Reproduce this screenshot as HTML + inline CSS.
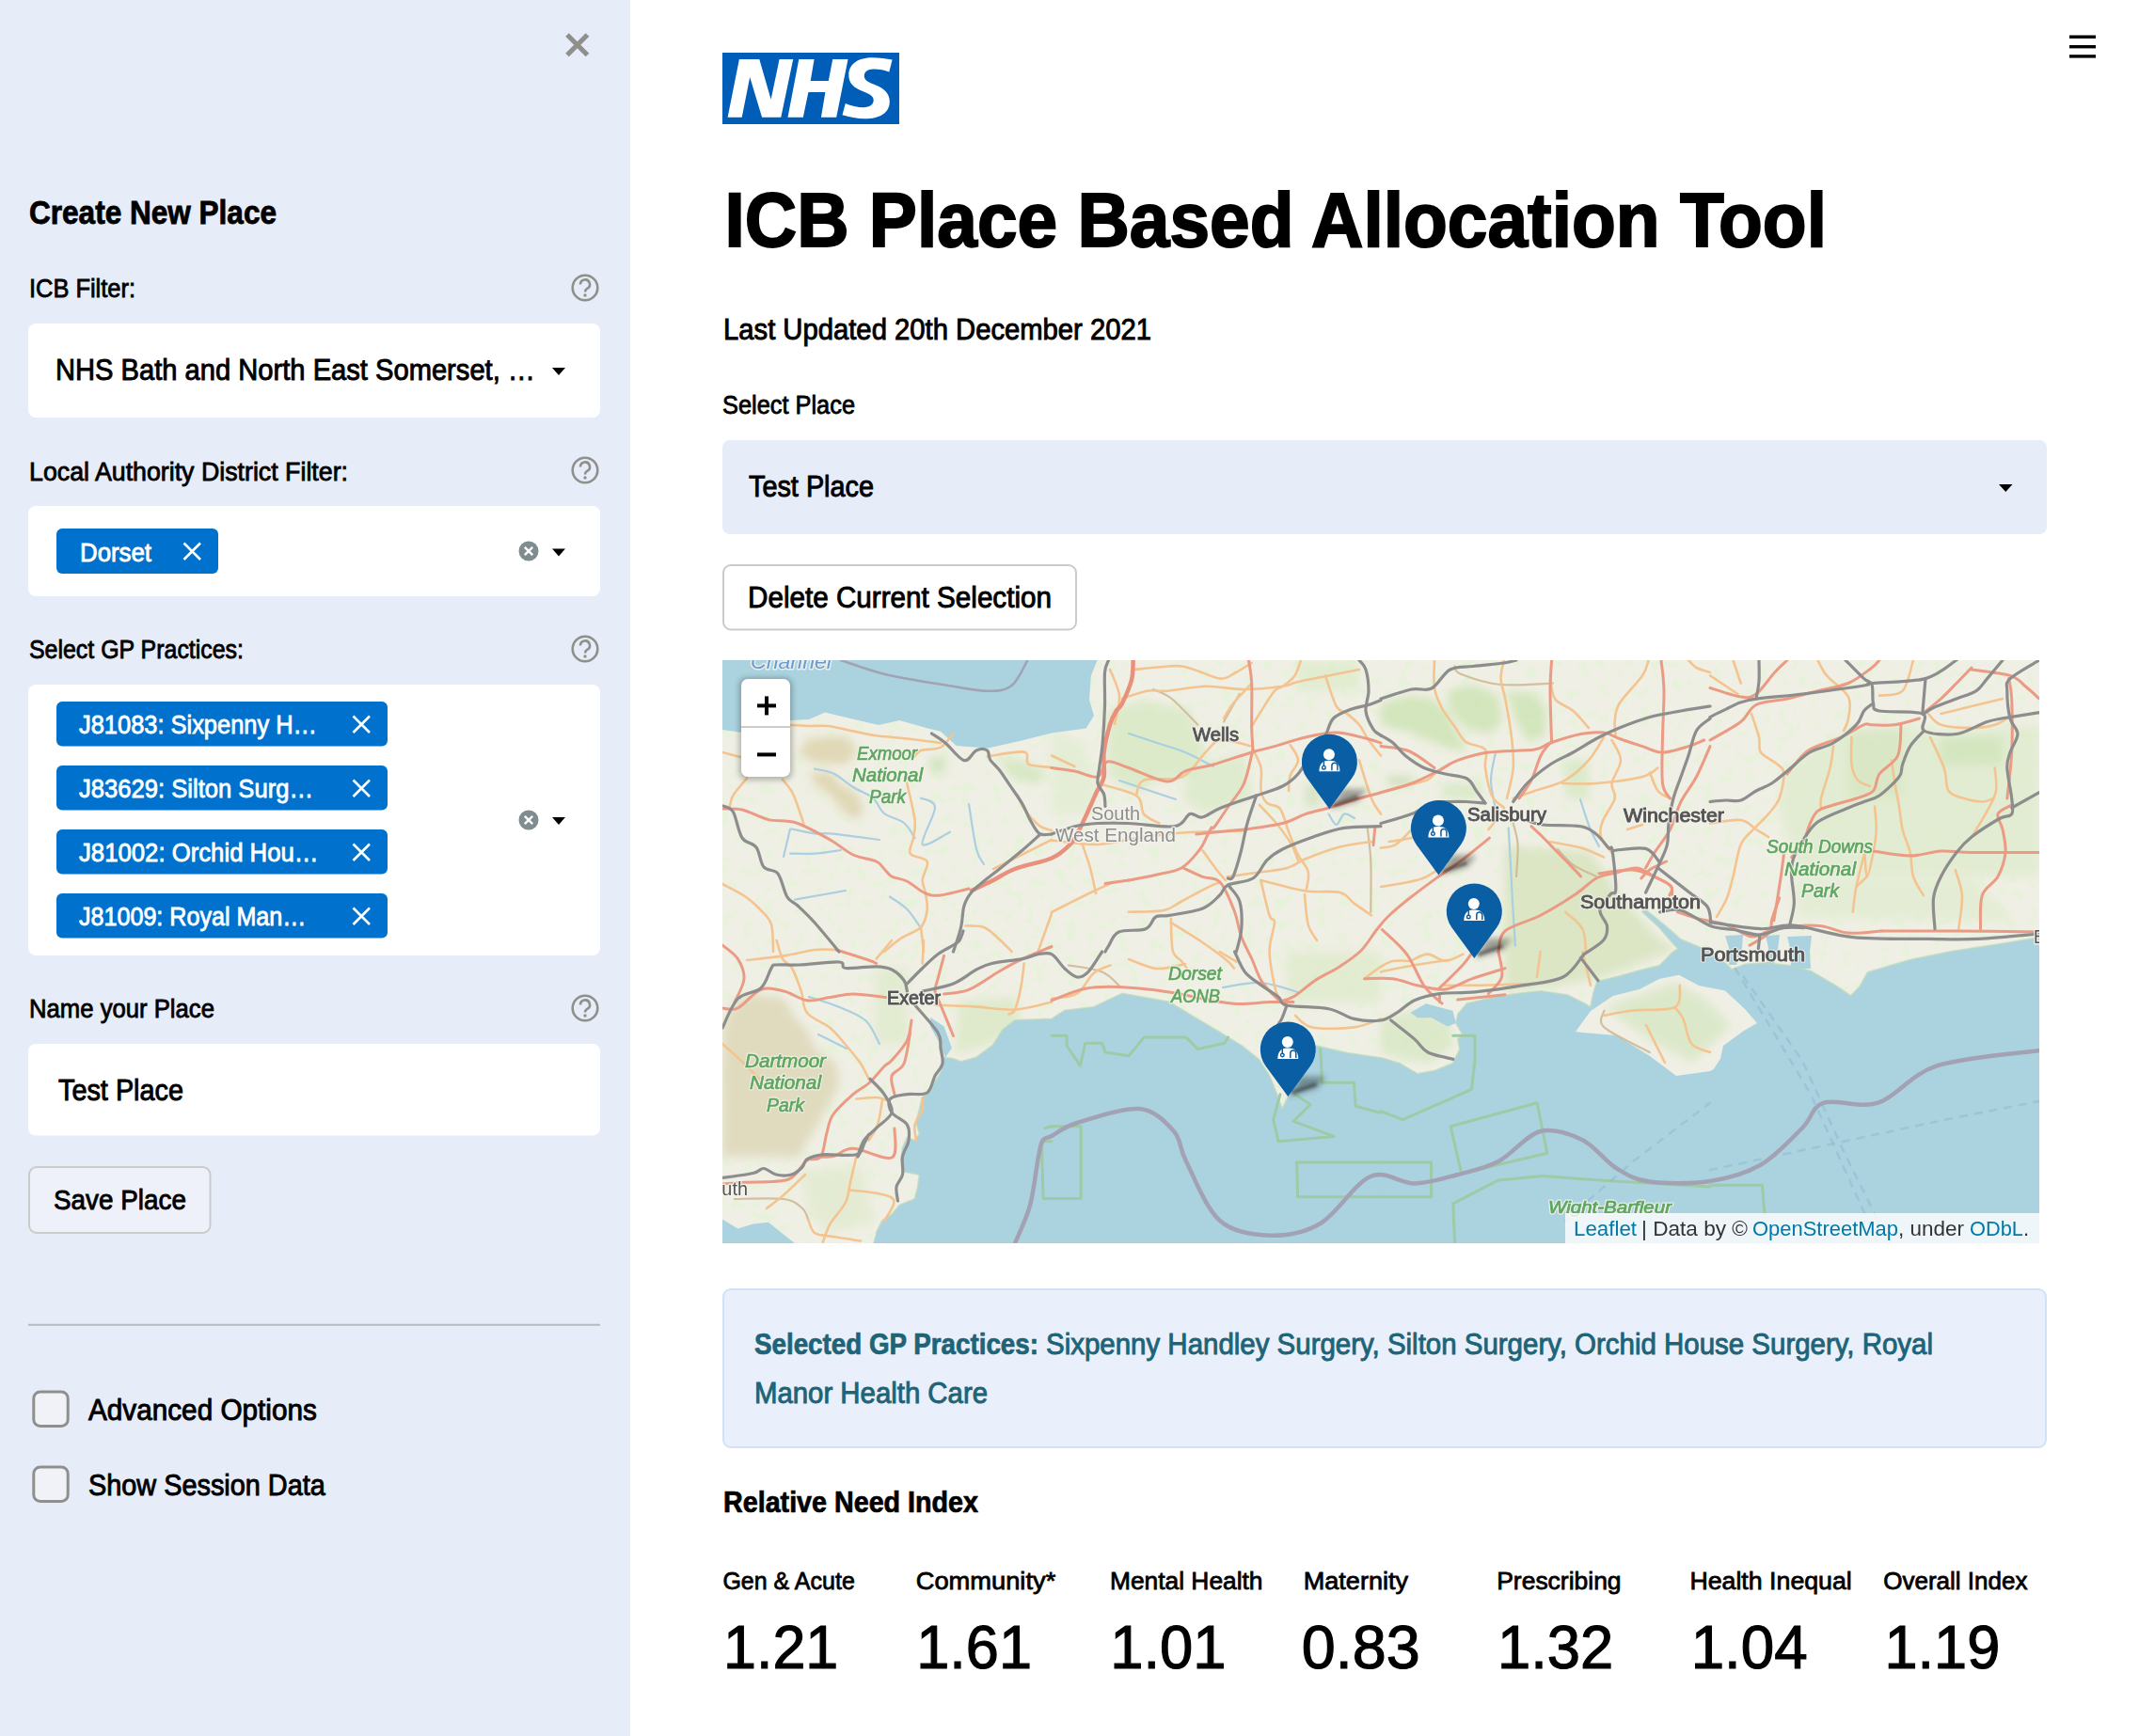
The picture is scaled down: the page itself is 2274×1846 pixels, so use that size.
<!DOCTYPE html>
<html><head><meta charset="utf-8"><title>ICB Place Based Allocation Tool</title>
<style>
html,body{margin:0;padding:0;background:#fff;overflow:hidden;}
body{width:2274px;height:1846px;position:relative;}
svg{position:absolute;left:0;top:0;display:block;font-family:"Liberation Sans",sans-serif;}
</style></head><body>
<svg width="2274" height="1846" viewBox="0 0 2274 1846" xmlns="http://www.w3.org/2000/svg">
<rect x="0" y="0" width="670" height="1846" fill="#e6ecf8"/>
<path d="M603 37 L624.5 58.5 M624.5 37 L603 58.5" stroke="#8f8f8b" stroke-width="5.2"/>
<text x="31" y="238" font-size="35" font-weight="700" stroke="#000" stroke-width="0.84" textLength="263" lengthAdjust="spacingAndGlyphs">Create New Place</text>
<text x="31" y="316" font-size="27.5" stroke="#000" stroke-width="0.82" textLength="113" lengthAdjust="spacingAndGlyphs">ICB Filter:</text>
<circle cx="622" cy="306" r="13.3" fill="none" stroke="#8f8f8b" stroke-width="2.6"/><path d="M617 302.5 a5 5 0 1 1 7.2 4.4 c-1.6 0.9 -2.2 1.6 -2.2 3.6" fill="none" stroke="#8f8f8b" stroke-width="2.6" stroke-linecap="butt"/><circle cx="622" cy="314" r="1.7" fill="#8f8f8b"/>
<rect x="30" y="344" width="608" height="100" rx="8" fill="#fff"/>
<text x="59" y="404" font-size="32" stroke="#000" stroke-width="0.96" textLength="510" lengthAdjust="spacingAndGlyphs">NHS Bath and North East Somerset, …</text>
<path d="M587 391 L601 391 L594.0 399 Z" fill="#000"/>
<text x="31" y="510.5" font-size="27.5" stroke="#000" stroke-width="0.82" textLength="339" lengthAdjust="spacingAndGlyphs">Local Authority District Filter:</text>
<circle cx="622" cy="500" r="13.3" fill="none" stroke="#8f8f8b" stroke-width="2.6"/><path d="M617 496.5 a5 5 0 1 1 7.2 4.4 c-1.6 0.9 -2.2 1.6 -2.2 3.6" fill="none" stroke="#8f8f8b" stroke-width="2.6" stroke-linecap="butt"/><circle cx="622" cy="508" r="1.7" fill="#8f8f8b"/>
<rect x="30" y="538" width="608" height="96" rx="8" fill="#fff"/>
<rect x="60" y="562" width="172" height="48" rx="6" fill="#0072ce"/>
<text x="85" y="596.5" font-size="27.5" fill="#fff" stroke="#fff" stroke-width="0.82" textLength="76" lengthAdjust="spacingAndGlyphs">Dorset</text>
<path d="M195.5 577.5 L213.0 595.0 M213.0 577.5 L195.5 595.0" stroke="#fff" stroke-width="2.6"/>
<circle cx="562" cy="586" r="10.5" fill="#7f8c90"/><path d="M557.8 581.8 L566.2 590.2 M566.2 581.8 L557.8 590.2" stroke="#fff" stroke-width="2.4"/>
<path d="M587 583.5 L601 583.5 L594.0 591.5 Z" fill="#000"/>
<text x="31" y="700" font-size="27.5" stroke="#000" stroke-width="0.82" textLength="228" lengthAdjust="spacingAndGlyphs">Select GP Practices:</text>
<circle cx="622" cy="690" r="13.3" fill="none" stroke="#8f8f8b" stroke-width="2.6"/><path d="M617 686.5 a5 5 0 1 1 7.2 4.4 c-1.6 0.9 -2.2 1.6 -2.2 3.6" fill="none" stroke="#8f8f8b" stroke-width="2.6" stroke-linecap="butt"/><circle cx="622" cy="698" r="1.7" fill="#8f8f8b"/>
<rect x="30" y="728" width="608" height="288" rx="8" fill="#fff"/>
<rect x="60" y="746" width="352" height="47.5" rx="6" fill="#0072ce"/>
<text x="84" y="780" font-size="27.5" fill="#fff" stroke="#fff" stroke-width="0.82" textLength="253" lengthAdjust="spacingAndGlyphs">J81083: Sixpenny H…</text>
<path d="M375.5 761.5 L393.0 779.0 M393.0 761.5 L375.5 779.0" stroke="#fff" stroke-width="2.6"/>
<rect x="60" y="814" width="352" height="47.5" rx="6" fill="#0072ce"/>
<text x="84" y="848" font-size="27.5" fill="#fff" stroke="#fff" stroke-width="0.82" textLength="249" lengthAdjust="spacingAndGlyphs">J83629: Silton Surg…</text>
<path d="M375.5 829.5 L393.0 847.0 M393.0 829.5 L375.5 847.0" stroke="#fff" stroke-width="2.6"/>
<rect x="60" y="882" width="352" height="47.5" rx="6" fill="#0072ce"/>
<text x="84" y="916" font-size="27.5" fill="#fff" stroke="#fff" stroke-width="0.82" textLength="254.5" lengthAdjust="spacingAndGlyphs">J81002: Orchid Hou…</text>
<path d="M375.5 897.5 L393.0 915.0 M393.0 897.5 L375.5 915.0" stroke="#fff" stroke-width="2.6"/>
<rect x="60" y="950" width="352" height="47.5" rx="6" fill="#0072ce"/>
<text x="84" y="984" font-size="27.5" fill="#fff" stroke="#fff" stroke-width="0.82" textLength="241.39999999999998" lengthAdjust="spacingAndGlyphs">J81009: Royal Man…</text>
<path d="M375.5 965.5 L393.0 983.0 M393.0 965.5 L375.5 983.0" stroke="#fff" stroke-width="2.6"/>
<circle cx="562" cy="872" r="10.5" fill="#7f8c90"/><path d="M557.8 867.8 L566.2 876.2 M566.2 867.8 L557.8 876.2" stroke="#fff" stroke-width="2.4"/>
<path d="M587 869 L601 869 L594.0 877 Z" fill="#000"/>
<text x="31" y="1082" font-size="27.5" stroke="#000" stroke-width="0.82" textLength="197" lengthAdjust="spacingAndGlyphs">Name your Place</text>
<circle cx="622" cy="1072" r="13.3" fill="none" stroke="#8f8f8b" stroke-width="2.6"/><path d="M617 1068.5 a5 5 0 1 1 7.2 4.4 c-1.6 0.9 -2.2 1.6 -2.2 3.6" fill="none" stroke="#8f8f8b" stroke-width="2.6" stroke-linecap="butt"/><circle cx="622" cy="1080" r="1.7" fill="#8f8f8b"/>
<rect x="30" y="1110" width="608" height="97.5" rx="8" fill="#fff"/>
<text x="62" y="1170" font-size="32" stroke="#000" stroke-width="0.96" textLength="133" lengthAdjust="spacingAndGlyphs">Test Place</text>
<rect x="31" y="1241" width="192.5" height="70" rx="8" fill="#eef1f9" stroke="#c9ccc9" stroke-width="2"/>
<text x="57" y="1286" font-size="30" stroke="#000" stroke-width="0.9" textLength="141" lengthAdjust="spacingAndGlyphs">Save Place</text>
<rect x="30" y="1407.8" width="608" height="2" fill="#b4bcbf"/>
<rect x="35.8" y="1480.0" width="36.4" height="36.4" rx="7" fill="#f0f2f8" stroke="#8f8f8b" stroke-width="3"/>
<text x="94" y="1509.5" font-size="31" stroke="#000" stroke-width="0.93" textLength="242.8" lengthAdjust="spacingAndGlyphs">Advanced Options</text>
<rect x="35.8" y="1560.0" width="36.4" height="36.4" rx="7" fill="#f0f2f8" stroke="#8f8f8b" stroke-width="3"/>
<text x="94" y="1589.5" font-size="31" stroke="#000" stroke-width="0.93" textLength="251.8" lengthAdjust="spacingAndGlyphs">Show Session Data</text>
<rect x="2200" y="37.5" width="28" height="3.4" fill="#000"/>
<rect x="2200" y="48" width="28" height="3.4" fill="#000"/>
<rect x="2200" y="58.2" width="28" height="3.4" fill="#000"/>
<g transform="translate(768,56)"><rect width="188" height="76" fill="#005eb8"/><path d="M17.9 7.1 L39.3 7.1 L51.6 49.7 L60.6 7.1 L75.2 7.1 L62.3 68.8 L42.1 68.8 L29.2 26.1 L20.7 68.8 L5.6 68.8 Z M81.3 7.1 L97.6 7.1 L93.7 30.1 L112.8 30.1 L117.2 7.1 L133.5 7.1 L121.2 68.8 L104.9 68.8 L109.4 41.9 L91.4 41.9 L85.8 68.8 L69.5 68.8 Z M180.6 7.6 L177.3 20.5 C172 18.3 166 17.3 160.5 17.5 C153 17.8 150.5 21.5 150.8 25.5 C151.2 30 157 32 163 34.5 C171 37.8 177.8 42.5 177.8 52 C177.8 64.5 166.5 70.3 151.5 70.3 C143.5 70.3 134.5 68.6 127.5 66.3 L130.8 54 C136.5 56.5 144 58.2 150 58.2 C156.5 58.2 160.7 55.3 160.7 50.6 C160.7 45.5 155 43.5 148.5 40.8 C140.5 37.5 134.3 33 134.3 24 C134.3 11.5 145 5.3 159.5 5.3 C166.5 5.3 174.5 6.3 180.6 7.6 Z" fill="#fff"/></g>
<text x="770.5" y="262" font-size="82" font-weight="700" stroke="#000" stroke-width="1.97" textLength="1171.5" lengthAdjust="spacingAndGlyphs">ICB Place Based Allocation Tool</text>
<text x="769" y="360.5" font-size="31" stroke="#000" stroke-width="0.93" textLength="455" lengthAdjust="spacingAndGlyphs">Last Updated 20th December 2021</text>
<text x="768" y="440.3" font-size="27.5" stroke="#000" stroke-width="0.82" textLength="141" lengthAdjust="spacingAndGlyphs">Select Place</text>
<rect x="768" y="468" width="1408" height="100" rx="8" fill="#e6ecf8"/>
<text x="796" y="528" font-size="31" stroke="#000" stroke-width="0.93" textLength="133" lengthAdjust="spacingAndGlyphs">Test Place</text>
<path d="M2125 515 L2139.5 515 L2132.25 523 Z" fill="#000"/>
<rect x="769" y="601" width="375" height="68.5" rx="8" fill="#fff" stroke="#c9ccc9" stroke-width="2"/>
<text x="795" y="646.3" font-size="31" stroke="#000" stroke-width="0.93" textLength="323" lengthAdjust="spacingAndGlyphs">Delete Current Selection</text>
<rect x="769" y="1371" width="1406" height="168" rx="8" fill="#eaf0fb" stroke="#d2e1f5" stroke-width="2"/>
<text x="802" y="1439.6" font-size="31" font-weight="700" fill="#1d6479" stroke="#1d6479" stroke-width="0.74" textLength="302" lengthAdjust="spacingAndGlyphs">Selected GP Practices:</text>
<text x="1112" y="1439.6" font-size="31" fill="#1d6479" stroke="#1d6479" stroke-width="0.93" textLength="943" lengthAdjust="spacingAndGlyphs">Sixpenny Handley Surgery, Silton Surgery, Orchid House Surgery, Royal</text>
<text x="802" y="1491.6" font-size="31" fill="#1d6479" stroke="#1d6479" stroke-width="0.93" textLength="248" lengthAdjust="spacingAndGlyphs">Manor Health Care</text>
<text x="769" y="1608.4" font-size="31" font-weight="700" stroke="#000" stroke-width="0.74" textLength="271" lengthAdjust="spacingAndGlyphs">Relative Need Index</text>
<text x="768.4" y="1690" font-size="26.5" stroke="#000" stroke-width="0.79" textLength="140.39999999999998" lengthAdjust="spacingAndGlyphs">Gen &amp; Acute</text>
<text x="973.7" y="1690" font-size="26.5" stroke="#000" stroke-width="0.79" textLength="148.5999999999999" lengthAdjust="spacingAndGlyphs">Community*</text>
<text x="1180" y="1690" font-size="26.5" stroke="#000" stroke-width="0.79" textLength="162.5" lengthAdjust="spacingAndGlyphs">Mental Health</text>
<text x="1385.7" y="1690" font-size="26.5" stroke="#000" stroke-width="0.79" textLength="111.39999999999986" lengthAdjust="spacingAndGlyphs">Maternity</text>
<text x="1591.2" y="1690" font-size="26.5" stroke="#000" stroke-width="0.79" textLength="132.39999999999986" lengthAdjust="spacingAndGlyphs">Prescribing</text>
<text x="1796.4" y="1690" font-size="26.5" stroke="#000" stroke-width="0.79" textLength="172.39999999999986" lengthAdjust="spacingAndGlyphs">Health Inequal</text>
<text x="2002.2" y="1690" font-size="26.5" stroke="#000" stroke-width="0.79" textLength="153.29999999999995" lengthAdjust="spacingAndGlyphs">Overall Index</text>
<text x="769" y="1774" font-size="65.5" stroke="#000" stroke-width="1.2" textLength="122.29999999999995" lengthAdjust="spacingAndGlyphs">1.21</text>
<text x="974.3" y="1774" font-size="65.5" stroke="#000" stroke-width="1.2" textLength="122.70000000000005" lengthAdjust="spacingAndGlyphs">1.61</text>
<text x="1180.3" y="1774" font-size="65.5" stroke="#000" stroke-width="1.2" textLength="123.20000000000005" lengthAdjust="spacingAndGlyphs">1.01</text>
<text x="1383.8" y="1774" font-size="65.5" stroke="#000" stroke-width="1.2" textLength="125.90000000000009" lengthAdjust="spacingAndGlyphs">0.83</text>
<text x="1592" y="1774" font-size="65.5" stroke="#000" stroke-width="1.2" textLength="123.29999999999995" lengthAdjust="spacingAndGlyphs">1.32</text>
<text x="1797.7" y="1774" font-size="65.5" stroke="#000" stroke-width="1.2" textLength="124.0" lengthAdjust="spacingAndGlyphs">1.04</text>
<text x="2003.5" y="1774" font-size="65.5" stroke="#000" stroke-width="1.2" textLength="122.80000000000018" lengthAdjust="spacingAndGlyphs">1.19</text>
<clipPath id="mc"><rect x="768" y="702" width="1400" height="620"/></clipPath>
<filter id="blur3" x="-50%" y="-50%" width="200%" height="200%"><feGaussianBlur stdDeviation="3"/></filter>
<filter id="sblur" x="-50%" y="-50%" width="200%" height="200%"><feGaussianBlur stdDeviation="1.5"/></filter>
<filter id="gblur" x="-20%" y="-20%" width="140%" height="140%"><feGaussianBlur stdDeviation="5"/></filter>
<filter id="speck" x="0" y="0" width="100%" height="100%"><feTurbulence type="fractalNoise" baseFrequency="0.09" numOctaves="2" seed="7"/><feColorMatrix type="matrix" values="0 0 0 0 0.80  0 0 0 0 0.89  0 0 0 0 0.70  8 0 0 0 -4.3"/></filter>
<g clip-path="url(#mc)">
<rect x="768" y="702" width="1400" height="620" fill="#f0efe5"/>
<rect x="768" y="702" width="1400" height="620" filter="url(#speck)" opacity="0.8"/>
<g filter="url(#gblur)">
<path d="M848 801 L859.6 785 L899 783 L912 799.6 L899 812.7 L866 811Z" fill="#ddd2ab" opacity="0.8"/>
<path d="M861 821 L882.5 821 L895.6 835.6 L908.7 842 L918.5 858.5 L912 871.6 L899 865 L882.5 845.5 L866 834Z" fill="#ddd2ab" opacity="0.8"/>
<path d="M989 804.5 L1005 806 L1005 822.5 L989 820Z" fill="#c9e2b4" opacity="0.8"/>
<path d="M1062.6 804.5 L1090 810 L1111.6 820 L1105 834 L1075 828Z" fill="#d2e6bd" opacity="0.8"/>
<path d="M1177 756 L1216 744.5 L1265 756 L1281.6 800 L1265 826 L1232.5 829.6 L1209.6 842.7 L1178.5 826Z" fill="#d9e9c6" opacity="0.85"/>
<path d="M1265 816.5 L1322.5 800 L1330.7 849 L1281.6 865.6 L1257 849Z" fill="#dbeac8" opacity="0.8"/>
<path d="M1380 702 L1445 702 L1445 734.7 L1380 734.7Z" fill="#dcebc9" opacity="0.7"/>
<path d="M1388 833 L1404 833 L1404 857.5 L1388 857.5Z" fill="#cfe4bb" opacity="0.8"/>
<path d="M1118 775.6 L1150 790 L1167 830 L1160 865.6 L1118 865.6Z" fill="#e0ecd0" opacity="0.7"/>
<path d="M1468 748 L1500.7 739.6 L1522 743 L1536.7 756 L1550 780.5 L1559.6 800 L1533.5 793.6 L1500.7 779 L1468 770.7Z" fill="#cfe4b8" opacity="0.9"/>
<path d="M1538.4 734.7 L1566 728 L1592.4 739.6 L1597.3 767.5 L1582.5 780.5 L1558 774 L1541.6 756Z" fill="#cfe4b8" opacity="0.9"/>
<path d="M1602 734.7 L1631.6 738 L1644.7 756 L1641.5 784 L1623.5 787 L1612 767.5Z" fill="#cfe4b8" opacity="0.9"/>
<path d="M1664 808 L1689 808 L1689 849 L1664 849Z" fill="#d6e8c3" opacity="0.8"/>
<path d="M1476 826 L1500.7 826 L1500.7 834.5 L1476 834.5Z" fill="#c5ddb0" opacity="0.9"/>
<path d="M1533.5 833 L1574 833 L1574 849 L1533.5 849Z" fill="#d6e8c3" opacity="0.8"/>
<path d="M1600 900 L1690 905 L1720 950 L1760 995 L1780 1010 L1700 1040 L1640 1050 L1600 1054Z" fill="#d8e4bf" opacity="0.85"/>
<path d="M1895 820 L1932.5 793.6 L1973.5 775.6 L2022.6 772.4 L2063.5 779 L2129 772.4 L2168 770.7 L2168 932 L1916 932 L1891.6 865.6Z" fill="#dfebcd" opacity="0.8"/>
<path d="M2063.5 784 L2129 784 L2129 813 L2063.5 813Z" fill="#cfe3ba" opacity="0.8"/>
<path d="M1965 775.6 L2022.6 775.6 L2022.6 849 L1965 849Z" fill="#d5e6c0" opacity="0.7"/>
<path d="M1905 935 L2100 935 L2140 980 L1910 975Z" fill="#e0ebcf" opacity="0.7"/>
<path d="M768 1091.6 L781 1065.5 L800.7 1057 L833.5 1062 L841.6 1078.5 L859.6 1098 L866 1114.5 L889 1131 L892 1155.5 L882.5 1171.8 L869.5 1196 L858 1212.7 L850 1230 L768 1230Z" fill="#ddd7b8" opacity="0.85"/>
<path d="M930 1030 L965 1030 L965 1110 L930 1110Z" fill="#dde9c9" opacity="0.7"/>
<path d="M1020 1065 L1080 1060 L1085 1095 L1040 1115 L1015 1120Z" fill="#dbe8c6" opacity="0.8"/>
<path d="M850 1245 L915 1240 L930 1300 L880 1310 L860 1290Z" fill="#dfe9cc" opacity="0.7"/>
<path d="M1368 1012 L1468 1012 L1468 1065.6 L1368 1065.6Z" fill="#dde9c9" opacity="0.7"/>
<path d="M1468 1085 L1503 1075 L1540 1085 L1546 1110 L1520 1130 L1490 1125 L1468 1120Z" fill="#d7e7c3" opacity="0.8"/>
<path d="M1705 1071 L1780 1045 L1810 1060 L1840 1090 L1800 1130 L1760 1110Z" fill="#d8e7c4" opacity="0.8"/>
</g>
<path d="M768 702 L1166.5 702 L1159.8 718.8 L1158 744 L1163 761 L1154.7 774.4 L1117.7 779.4 L1084 788 L1050.4 795.4 L1016.7 793 L1000 777.7 L986.4 774.4 L956 766 L934 771 L904 764 L877 757.5 L860 765 L840 766 L787.6 778.8 L768 776Z" fill="#aad3df"/>
<path d="M768 1296.5 L784.4 1306.4 L800.7 1301.5 L817 1299.8 L833.5 1313 L845 1322 L768 1322Z" fill="#aad3df"/>
<path d="M928.4 1322 L931.6 1311 L938 1298 L948 1291.6 L956 1281.8 L972.6 1275 L975.8 1262 L977.5 1249 L961 1245.8 L958 1232.7 L959.5 1221 L964.4 1209.8 L972.6 1212.7 L977.5 1206 L974 1193 L977.5 1180 L980.7 1167 L987 1162 L994 1150.5 L1000 1140.7 L1003.6 1124.4 L1013.5 1126 L1021.6 1129 L1038 1124.4 L1056 1111 L1066 1095 L1079 1085 L1118 1083.5 L1132 1074.5 L1162.6 1071 L1193 1056.6 L1243 1065.6 L1296.6 1097.7 L1320 1112 L1338.7 1127 L1350 1145 L1358 1165 L1363 1179.5 L1370.5 1164.6 L1380 1140 L1398.5 1112 L1432 1119.7 L1469.6 1125.3 L1488.3 1131 L1507 1142 L1525.7 1138.4 L1544.4 1131 L1552 1116 L1550 1104.7 L1555.6 1101 L1548 1088 L1550 1078.5 L1559.4 1067.3 L1591 1059.8 L1619 1056 L1638 1054 L1666 1058 L1684.7 1067.3 L1691 1071 L1694 1056 L1698 1044 L1722 1038 L1743 1032 L1764 1027 L1778 1013 L1784 1008.7 L1775 999 L1764 986 L1746 969.5 L1750 968 L1771 985 L1786.6 999 L1806 1007 L1820 1013 L1834 1024 L1841 1031 L1855 1025.6 L1876 1024 L1904 1027 L1925 1032.6 L1953.5 1049.4 L1967.5 1059 L1977 1049.4 L1985.7 1034 L2029.6 1021 L2073.5 1012 L2128.5 1003.5 L2168 997 L2168 1322Z" fill="#aad3df"/>
<path d="M1499.5 1076.7 L1516 1067.3 L1544.4 1074.8 L1548 1088 L1538.8 1091.6 L1522 1082.3 L1507 1082.3Z" fill="#aad3df"/>
<path d="M1834 995 L1853 994 L1852 1008 L1846 1026 L1838 1026 L1838 1008Z" fill="#aad3df"/>
<path d="M1877 995 L1892 994 L1890 1010 L1886 1026 L1878 1026 L1880 1008Z" fill="#aad3df"/>
<path d="M1900 996 L1926 995 L1924 1012 L1925 1030 L1904 1030 L1904 1012Z" fill="#aad3df"/>
<path d="M989 1081.8 L1003.6 1091.6 L1012 1114.5 L1005 1124.4 L997 1106 L989 1091.6Z" fill="#aad3df"/>
<path d="M1675 1097 L1691 1075 L1715 1059 L1743 1052 L1764 1041 L1785 1036.8 L1806 1048 L1834 1053.6 L1855 1073 L1868 1088 L1854 1096 L1832 1112 L1829 1126 L1821.6 1137 L1818 1139 L1782 1144 L1753.7 1122.7 L1718 1101 L1682 1098Z" fill="#f0efe5"/>
<path d="M1705 1071 L1780 1045 L1810 1060 L1840 1090 L1800 1130 L1760 1110Z" fill="#d8e7c4" opacity="0.8" filter="url(#gblur)"/>
<path d="M931.6 1311 L938 1298 L948 1291.6 L956 1281.8 L972.6 1275 L975.8 1262 L977.5 1249 L961 1245.8 L958 1232.7 L959.5 1221 L964.4 1209.8 L972.6 1212.7 L977.5 1206 L974 1193 L977.5 1180 L980.7 1167 L987 1162 L994 1150.5 L1000 1140.7 L1003.6 1124.4 L1013.5 1126 L1021.6 1129 L1038 1124.4 L1056 1111 L1066 1095 L1079 1085 L1118 1083.5 L1132 1074.5 L1162.6 1071 L1193 1056.6 L1243 1065.6 L1296.6 1097.7 L1320 1112 L1338.7 1127 L1350 1145 L1358 1165 L1363 1179.5 L1370.5 1164.6 L1380 1140 L1398.5 1112 L1432 1119.7 L1469.6 1125.3 L1488.3 1131 L1507 1142 L1525.7 1138.4 L1544.4 1131 L1552 1116 L1550 1104.7 L1555.6 1101 L1548 1088 L1550 1078.5 L1559.4 1067.3 L1591 1059.8 L1619 1056 L1638 1054 L1666 1058 L1684.7 1067.3 L1691 1071 L1694 1056 L1698 1044 L1722 1038 L1743 1032 L1764 1027 L1778 1013 L1784 1008.7 L1775 999 L1764 986 L1746 969.5 L1750 968 L1771 985 L1786.6 999 L1806 1007 L1820 1013 L1834 1024 L1841 1031 L1855 1025.6 L1876 1024 L1904 1027 L1925 1032.6 L1953.5 1049.4 L1967.5 1059 L1977 1049.4 L1985.7 1034 L2029.6 1021 L2073.5 1012 L2128.5 1003.5 L2168 997" fill="none" stroke="#b9d6c0" stroke-width="2" stroke-linejoin="round" stroke-linecap="round" opacity="0.7"/>
<path d="M1118.0 1101.3 L1134.1 1101.3 L1134.1 1112.0 L1148.4 1133.4 L1153.7 1109.3 L1171.6 1109.3 L1175.1 1119.1 L1200.1 1122.7 L1216.2 1103.1 L1260.9 1103.1 L1273.4 1115.6 L1301.9 1109.3 L1305.5 1103.1" fill="none" stroke="#9fcaa6" stroke-width="3" stroke-linejoin="round" stroke-linecap="round"/>
<path d="M1403.7 1115.6 L1405.5 1151.3 L1439.4 1151.3 L1441.2 1176.3 L1468.0 1183.4" fill="none" stroke="#9fcaa6" stroke-width="3" stroke-linejoin="round" stroke-linecap="round"/>
<path d="M1360.9 1163.8 L1353.7 1190.6 L1359.1 1213.8 L1418.0 1208.4 L1375.1 1192.4 L1393.0 1174.5 L1376.9 1163.8" fill="none" stroke="#9fcaa6" stroke-width="3" stroke-linejoin="round" stroke-linecap="round"/>
<path d="M1378.7 1236.1 L1468.0 1236.1" fill="none" stroke="#9fcaa6" stroke-width="3" stroke-linejoin="round" stroke-linecap="round"/>
<path d="M1378.7 1236.1 L1379.6 1272.7 L1468.0 1272.7" fill="none" stroke="#9fcaa6" stroke-width="3" stroke-linejoin="round" stroke-linecap="round"/>
<path d="M1118.0 1197.7 L1149.2 1197.7 L1149.2 1274.5 L1118.0 1274.5" fill="none" stroke="#9fcaa6" stroke-width="3" stroke-linejoin="round" stroke-linecap="round"/>
<path d="M1544.8 1101.3 L1568.0 1101.3 L1568.0 1128.1 L1564.4 1158.4 L1491.2 1190.6 L1468.0 1181.6" fill="none" stroke="#9fcaa6" stroke-width="3" stroke-linejoin="round" stroke-linecap="round"/>
<path d="M1542.1 1197.7 L1634.1 1172.7 L1644.8 1226.3 L1553.7 1247.7 L1542.1 1197.7" fill="none" stroke="#9fcaa6" stroke-width="3" stroke-linejoin="round" stroke-linecap="round"/>
<path d="M1468.0 1236.1 L1521.6 1236.1 L1521.6 1272.7 L1468.0 1272.7" fill="none" stroke="#9fcaa6" stroke-width="3" stroke-linejoin="round" stroke-linecap="round"/>
<path d="M1544.8 1279.9 L1593.0 1254.9 L1639.4 1250.4 L1700.1 1254.9 L1818.0 1262.0" fill="none" stroke="#9fcaa6" stroke-width="3" stroke-linejoin="round" stroke-linecap="round"/>
<path d="M1544.8 1279.9 L1546.6 1322.0" fill="none" stroke="#9fcaa6" stroke-width="3" stroke-linejoin="round" stroke-linecap="round"/>
<path d="M1818.0 1260.2 L1873.4 1260.2 L1876.0 1290.6" fill="none" stroke="#9fcaa6" stroke-width="3" stroke-linejoin="round" stroke-linecap="round"/>
<path d="M1110.9 1199.5 L1118.0 1197.7" fill="none" stroke="#9fcaa6" stroke-width="3" stroke-linejoin="round" stroke-linecap="round"/>
<path d="M1118.0 1213.8 L1107.3 1213.8 L1109.1 1274.5 L1118.0 1274.5" fill="none" stroke="#9fcaa6" stroke-width="3" stroke-linejoin="round" stroke-linecap="round"/>
<path d="M1844.8 1029.9 L1925.1 1163.8 L1996.6 1322.0" fill="none" stroke="#8fb8d2" stroke-width="2.5" stroke-linejoin="round" stroke-linecap="round" stroke-dasharray="7 9" opacity="0.55"/>
<path d="M1853.7 1038.8 L1916.2 1128.1 L1960.9 1226.3 L1996.6 1297.7" fill="none" stroke="#8fb8d2" stroke-width="2.5" stroke-linejoin="round" stroke-linecap="round" stroke-dasharray="7 9" opacity="0.55"/>
<path d="M1818.0 1244.1 L1943.0 1217.4 L2068.0 1190.6 L2168.0 1170.9" fill="none" stroke="#8fb8d2" stroke-width="2.5" stroke-linejoin="round" stroke-linecap="round" stroke-dasharray="7 9" opacity="0.55"/>
<path d="M1664.4 1297.7 L1735.9 1235.2 L1818.0 1172.7" fill="none" stroke="#8fb8d2" stroke-width="2.5" stroke-linejoin="round" stroke-linecap="round" stroke-dasharray="7 9" opacity="0.55"/>
<path d="M893.9 702 C901.8 704.5 922.0 712.5 941 717 C960.0 721.5 989.8 726.0 1008 729 C1026.2 732.0 1038.7 734.8 1050 734.8 C1061.3 734.8 1068.5 734.5 1075.6 729 C1082.7 723.5 1089.6 706.5 1092.4 702" fill="none" stroke="#a2a2b4" stroke-width="2.6" stroke-linejoin="round" stroke-linecap="round"/>
<path d="M1079 1322 C1081.7 1315.3 1090.9 1296.7 1095 1281.8 C1099.1 1266.9 1101.3 1244.2 1103.5 1232.7 C1105.7 1221.2 1106.0 1217.1 1108.4 1213 C1110.8 1208.9 1111.9 1211.2 1118 1208 C1124.1 1204.8 1129.5 1198.8 1145 1194 C1160.5 1189.2 1193.8 1177.5 1211 1179 C1228.2 1180.5 1239.7 1193.7 1248 1203 C1256.3 1212.3 1252.9 1219.2 1261 1235 C1269.1 1250.8 1281.8 1284.6 1296.6 1297.7 C1311.4 1310.8 1332.2 1313.2 1350 1313.8 C1367.8 1314.3 1385.9 1311.5 1403.7 1301 C1421.5 1290.5 1440.3 1258.1 1457 1251 C1473.7 1243.9 1488.5 1258.7 1503.7 1258.4 C1518.9 1258.2 1533.1 1253.4 1548 1249.5 C1562.9 1245.6 1578.1 1242.8 1593 1235 C1607.9 1227.2 1622.8 1206.8 1637.6 1203 C1652.4 1199.2 1668.6 1205.5 1682 1212 C1695.4 1218.5 1706.0 1234.6 1718 1242 C1730.0 1249.4 1737.0 1254.3 1753.7 1256.6 C1770.4 1258.9 1798.3 1259.0 1818 1256 C1837.7 1253.0 1855.3 1248.2 1871.6 1238.8 C1887.9 1229.4 1904.8 1210.5 1916 1199.5 C1927.2 1188.5 1925.6 1177.2 1939 1172.7 C1952.4 1168.2 1976.6 1179.2 1996.6 1172.7 C2016.6 1166.2 2030.4 1142.7 2059 1133.4 C2087.6 1124.1 2149.8 1119.7 2168 1117" fill="none" stroke="#a2a2b4" stroke-width="4.5" stroke-linejoin="round" stroke-linecap="round"/>
<path d="M866 817.6 C869.3 818.4 879.2 819.3 886 822.5 C892.8 825.7 900.0 832.6 907 837 C914.0 841.4 922.5 844.0 928 848.7 C933.5 853.4 934.5 860.6 940 865 C945.5 869.4 955.6 870.7 961 875 C966.4 879.3 970.6 888.3 972.5 891" fill="none" stroke="#a9cfe0" stroke-width="2.2" stroke-linejoin="round" stroke-linecap="round"/>
<path d="M841.6 881.5 C845.7 882.3 859.2 885.6 866 886.4 C872.8 887.2 871.0 885.3 882.5 886.4 C894.0 887.5 926.2 891.9 935 893" fill="none" stroke="#a9cfe0" stroke-width="2.2" stroke-linejoin="round" stroke-linecap="round"/>
<path d="M840 907.6 C844.3 907.6 857.0 908.2 866 907.6 C875.0 907.0 889.3 904.6 894 904" fill="none" stroke="#a9cfe0" stroke-width="2.2" stroke-linejoin="round" stroke-linecap="round"/>
<path d="M979 848.7 C981.5 850.3 993.7 850.3 994 858.5 C994.3 866.7 978.0 893.4 980.7 897.8 C983.4 902.2 1005.1 886.9 1010 884.7" fill="none" stroke="#a9cfe0" stroke-width="2.2" stroke-linejoin="round" stroke-linecap="round"/>
<path d="M1030 855 C1031.3 863.0 1035.3 892.0 1038 902.7 C1040.7 913.4 1044.7 916.3 1046 919" fill="none" stroke="#a9cfe0" stroke-width="2.2" stroke-linejoin="round" stroke-linecap="round"/>
<path d="M845 956.7 L899 947" fill="none" stroke="#a9cfe0" stroke-width="2.2" stroke-linejoin="round" stroke-linecap="round"/>
<path d="M946 953.5 C949.0 955.7 958.8 961.3 964 966.5 C969.2 971.7 975.2 981.5 977.5 984.5" fill="none" stroke="#a9cfe0" stroke-width="2.2" stroke-linejoin="round" stroke-linecap="round"/>
<path d="M833 911 L840 881.5" fill="none" stroke="#a9cfe0" stroke-width="2.2" stroke-linejoin="round" stroke-linecap="round"/>
<path d="M1412.5 865.6 C1413.9 867.5 1418.0 877.0 1420.7 877 C1423.5 877.0 1425.8 866.8 1429 865.6 C1432.2 864.4 1438.2 869.3 1440 870" fill="none" stroke="#a9cfe0" stroke-width="2.2" stroke-linejoin="round" stroke-linecap="round"/>
<path d="M1603.7 880.6 C1604.1 887.2 1605.3 906.8 1606 920 C1606.7 933.2 1607.2 945.7 1608 960 C1608.8 974.3 1610.5 998.0 1611 1005.6" fill="none" stroke="#a9cfe0" stroke-width="2.2" stroke-linejoin="round" stroke-linecap="round"/>
<path d="M1590 800 C1589.2 805.0 1585.0 820.0 1585 830 C1585.0 840.0 1589.2 855.0 1590 860" fill="none" stroke="#a9cfe0" stroke-width="2.2" stroke-linejoin="round" stroke-linecap="round"/>
<path d="M1680 850 C1681.7 855.0 1686.7 871.7 1690 880 C1693.3 888.3 1698.3 896.7 1700 900" fill="none" stroke="#a9cfe0" stroke-width="2.2" stroke-linejoin="round" stroke-linecap="round"/>
<path d="M1200 780 C1205.0 781.7 1220.0 786.7 1230 790 C1240.0 793.3 1250.0 795.8 1260 800 C1270.0 804.2 1285.0 812.5 1290 815" fill="none" stroke="#a9cfe0" stroke-width="2.2" stroke-linejoin="round" stroke-linecap="round"/>
<path d="M1190 830 C1195.0 831.7 1210.0 836.7 1220 840 C1230.0 843.3 1245.0 848.3 1250 850" fill="none" stroke="#a9cfe0" stroke-width="2.2" stroke-linejoin="round" stroke-linecap="round"/>
<path d="M860 1060 C865.0 1061.7 880.0 1065.8 890 1070 C900.0 1074.2 912.5 1078.3 920 1085 C927.5 1091.7 932.5 1105.8 935 1110" fill="none" stroke="#a9cfe0" stroke-width="2.2" stroke-linejoin="round" stroke-linecap="round"/>
<path d="M870 1100 L900 1115" fill="none" stroke="#a9cfe0" stroke-width="2.2" stroke-linejoin="round" stroke-linecap="round"/>
<path d="M1300 1050 C1306.7 1049.2 1326.7 1044.2 1340 1045 C1353.3 1045.8 1373.3 1053.3 1380 1055" fill="none" stroke="#a9cfe0" stroke-width="2.2" stroke-linejoin="round" stroke-linecap="round"/>
<path d="M1226 733 C1229.3 734.7 1237.7 736.7 1245.6 743 C1253.5 749.3 1268.8 766.1 1273.5 770.7" fill="none" stroke="#c9b48c" stroke-width="2.2" stroke-linejoin="round" stroke-linecap="round" opacity="0.8"/>
<path d="M1301 767.5 L1317.6 738" fill="none" stroke="#c9b48c" stroke-width="2.2" stroke-linejoin="round" stroke-linecap="round" opacity="0.8"/>
<path d="M1546.5 708.5 C1547.6 709.9 1544.8 713.5 1553 716.7 C1561.2 720.0 1579.3 726.4 1595.6 728 C1611.9 729.6 1641.8 726.8 1651 726.5" fill="none" stroke="#c9b48c" stroke-width="2.2" stroke-linejoin="round" stroke-linecap="round" opacity="0.8"/>
<path d="M1608.7 875.5 C1609.5 879.2 1613.0 888.6 1613.6 898 C1614.1 907.4 1612.3 926.3 1612 932" fill="none" stroke="#c9b48c" stroke-width="2.2" stroke-linejoin="round" stroke-linecap="round" opacity="0.8"/>
<path d="M1656 903 C1658.8 905.8 1665.7 914.8 1672.5 919.6 C1679.3 924.4 1692.9 929.9 1697 932" fill="none" stroke="#c9b48c" stroke-width="2.2" stroke-linejoin="round" stroke-linecap="round" opacity="0.8"/>
<path d="M1453.7 880.6 C1454.3 886.5 1456.7 901.1 1457.3 916 C1457.9 930.9 1457.3 961.0 1457.3 970" fill="none" stroke="#c9b48c" stroke-width="2.2" stroke-linejoin="round" stroke-linecap="round" opacity="0.8"/>
<path d="M781 1275 C789.8 1275.0 821.5 1273.3 833.5 1275 C845.5 1276.7 848.6 1281.2 853 1285 C857.4 1288.8 858.5 1295.8 859.6 1298" fill="none" stroke="#c9b48c" stroke-width="2.2" stroke-linejoin="round" stroke-linecap="round" opacity="0.8"/>
<path d="M1135.9 1026.3 C1141.9 1027.5 1162.7 1029.8 1171.6 1033.4 C1180.5 1037.0 1186.4 1045.3 1189.4 1047.7" fill="none" stroke="#c9b48c" stroke-width="2.2" stroke-linejoin="round" stroke-linecap="round" opacity="0.8"/>
<path d="M1705.5 1074.5 C1705.5 1077.5 1697.5 1085.0 1705.5 1092.4 C1713.5 1099.8 1745.7 1114.6 1753.7 1119" fill="none" stroke="#c9b48c" stroke-width="2.2" stroke-linejoin="round" stroke-linecap="round" opacity="0.8"/>
<path d="M794 827.5 C791.6 830.5 782.5 840.6 779.5 845.5 C776.5 850.4 776.6 855.1 776 857" fill="none" stroke="#f4c490" stroke-width="2.6" stroke-linejoin="round" stroke-linecap="round"/>
<path d="M832 829 C833.8 831.5 839.5 836.9 843 844 C846.5 851.1 851.0 865.9 853 871.6 C855.0 877.3 854.4 876.9 854.7 878" fill="none" stroke="#f4c490" stroke-width="2.6" stroke-linejoin="round" stroke-linecap="round"/>
<path d="M971 806 C972.3 804.7 974.2 799.9 979 798 C983.8 796.1 994.3 797.7 1000 794.7 C1005.7 791.7 1010.8 782.5 1013 780" fill="none" stroke="#f4c490" stroke-width="2.6" stroke-linejoin="round" stroke-linecap="round"/>
<path d="M964 832 C965.4 838.6 971.3 861.8 972.5 871.6 C973.7 881.4 971.8 885.0 971 891 C970.2 897.0 965.2 903.4 967.6 907.6 C970.0 911.8 983.4 911.4 985.6 916 C987.8 920.6 981.0 929.8 980.7 935.5 C980.4 941.2 983.2 944.6 984 950 C984.8 955.4 986.4 962.0 985.6 968 C984.8 974.0 983.6 981.1 979 986 C974.4 990.9 964.5 993.3 958 997.6 C951.5 1001.9 943.0 1009.6 940 1012" fill="none" stroke="#f4c490" stroke-width="2.6" stroke-linejoin="round" stroke-linecap="round"/>
<path d="M979 986 L982 1012" fill="none" stroke="#f4c490" stroke-width="2.6" stroke-linejoin="round" stroke-linecap="round"/>
<path d="M768 940 C772.1 942.2 785.7 948.8 792.5 953.5 C799.3 958.2 804.4 963.1 809 968 C813.6 972.9 817.8 975.7 820 983 C822.2 990.3 821.7 1007.2 822 1012" fill="none" stroke="#f4c490" stroke-width="2.6" stroke-linejoin="round" stroke-linecap="round"/>
<path d="M1049.5 804.5 C1056.0 803.7 1081.4 798.2 1088.7 799.6 C1096.0 801.0 1088.7 810.0 1093.6 812.7 C1098.5 815.4 1113.9 815.5 1118 816" fill="none" stroke="#f4c490" stroke-width="2.6" stroke-linejoin="round" stroke-linecap="round"/>
<path d="M1082 845.5 C1083.1 847.9 1084.9 854.6 1088.7 860 C1092.5 865.4 1100.1 874.2 1105 878 C1109.9 881.8 1115.8 882.2 1118 883" fill="none" stroke="#f4c490" stroke-width="2.6" stroke-linejoin="round" stroke-linecap="round"/>
<path d="M1026.5 984.5 C1029.8 984.8 1040.0 983.6 1046 986 C1052.0 988.4 1057.7 994.7 1062.6 999 C1067.5 1003.3 1073.4 1009.8 1075.6 1012" fill="none" stroke="#f4c490" stroke-width="2.6" stroke-linejoin="round" stroke-linecap="round"/>
<path d="M1056 924 L1118 893" fill="none" stroke="#f4c490" stroke-width="2.6" stroke-linejoin="round" stroke-linecap="round"/>
<path d="M1118 971.5 L1103.5 1012" fill="none" stroke="#f4c490" stroke-width="2.6" stroke-linejoin="round" stroke-linecap="round"/>
<path d="M841 771 C844.2 771.2 853.5 771.8 860 772 C866.5 772.2 873.3 771.3 880 772 C886.7 772.7 891.7 774.3 900 776 C908.3 777.7 920.0 780.5 930 782 C940.0 783.5 948.3 783.7 960 785 C971.7 786.3 993.3 789.2 1000 790" fill="none" stroke="#f4c490" stroke-width="2.6" stroke-linejoin="round" stroke-linecap="round"/>
<path d="M768 800 C771.7 801.0 782.2 804.0 790 806 C797.8 808.0 807.0 809.3 815 812 C823.0 814.7 834.2 820.3 838 822" fill="none" stroke="#f4c490" stroke-width="2.6" stroke-linejoin="round" stroke-linecap="round"/>
<path d="M1206 712 C1212.0 711.4 1233.5 709.1 1242 708.5 C1250.5 707.9 1251.8 707.7 1257 708.5 C1262.2 709.3 1266.7 711.3 1273.5 713.5 C1280.3 715.7 1291.2 721.4 1298 721.6 C1304.8 721.9 1308.5 717.8 1314 715 C1319.5 712.2 1327.9 706.7 1330.7 705" fill="none" stroke="#f4c490" stroke-width="2.6" stroke-linejoin="round" stroke-linecap="round"/>
<path d="M1193 743 C1197.4 741.6 1211.5 736.1 1219.5 734.7 C1227.5 733.3 1230.4 735.5 1240.7 734.7 C1251.0 733.9 1268.0 730.1 1281.6 729.8 C1295.2 729.5 1308.8 733.0 1322.5 733 C1336.2 733.0 1353.9 731.1 1363.5 729.8 C1373.1 728.5 1371.8 726.9 1380 725 C1388.2 723.1 1401.7 720.6 1412.5 718.4 C1423.3 716.2 1439.6 713.1 1445 712" fill="none" stroke="#f4c490" stroke-width="2.6" stroke-linejoin="round" stroke-linecap="round"/>
<path d="M1330.7 772.4 C1332.1 770.2 1335.0 765.3 1339 759 C1343.0 752.7 1350.9 739.5 1355 734.7 C1359.1 729.9 1359.9 732.7 1363.5 730 C1367.1 727.3 1373.2 723.1 1376.5 718.4 C1379.8 713.7 1381.9 704.7 1383 702" fill="none" stroke="#f4c490" stroke-width="2.6" stroke-linejoin="round" stroke-linecap="round"/>
<path d="M1332 797 C1333.4 800.2 1339.2 809.2 1340.6 816.5 C1342.0 823.8 1339.5 834.8 1340.6 841 C1341.7 847.2 1343.8 851.0 1347 854 C1350.2 857.0 1356.7 855.7 1360 859 C1363.3 862.3 1365.3 870.5 1366.7 874 C1368.1 877.5 1368.0 879.0 1368.3 880" fill="none" stroke="#f4c490" stroke-width="2.6" stroke-linejoin="round" stroke-linecap="round"/>
<path d="M1118 893.5 C1126.2 894.2 1150.7 898.6 1167 898 C1183.3 897.4 1199.7 892.2 1216 890 C1232.3 887.8 1247.0 886.1 1265 885 C1283.0 883.9 1314.2 883.8 1324 883.6" fill="none" stroke="#f4c490" stroke-width="2.6" stroke-linejoin="round" stroke-linecap="round"/>
<path d="M1167 833 C1173.8 835.2 1199.8 840.6 1208 846 C1216.2 851.4 1211.9 860.7 1216 865.6 C1220.1 870.5 1229.8 873.9 1232.5 875.5" fill="none" stroke="#f4c490" stroke-width="2.6" stroke-linejoin="round" stroke-linecap="round"/>
<path d="M1208 846 C1209.3 843.3 1207.8 832.9 1216 829.6 C1224.2 826.3 1246.1 830.9 1257 826 C1267.9 821.1 1274.8 806.5 1281.6 800 C1288.4 793.5 1289.8 788.1 1298 787 C1306.2 785.9 1325.2 792.5 1330.7 793.6" fill="none" stroke="#f4c490" stroke-width="2.6" stroke-linejoin="round" stroke-linecap="round"/>
<path d="M1371.6 792 C1373.0 794.7 1380.0 802.9 1380 808.4 C1380.0 813.9 1373.3 819.3 1371.6 824.7 C1369.9 830.1 1370.3 838.3 1370 841" fill="none" stroke="#f4c490" stroke-width="2.6" stroke-linejoin="round" stroke-linecap="round"/>
<path d="M1409 718.4 C1411.0 723.8 1416.9 744.2 1420.7 751 C1424.5 757.8 1428.0 755.7 1432 759 C1436.0 762.3 1441.2 766.0 1445 770.7 C1448.8 775.4 1451.2 781.5 1455 787 C1458.8 792.5 1465.8 800.8 1468 803.5" fill="none" stroke="#f4c490" stroke-width="2.6" stroke-linejoin="round" stroke-linecap="round"/>
<path d="M1445 808.4 C1447.2 815.2 1454.2 839.5 1458 849 C1461.8 858.5 1466.3 862.8 1468 865.6" fill="none" stroke="#f4c490" stroke-width="2.6" stroke-linejoin="round" stroke-linecap="round"/>
<path d="M1339 856 C1342.0 859.2 1351.3 868.5 1357 875.5 C1362.7 882.5 1369.2 891.5 1373 898 C1376.8 904.5 1378.8 911.9 1380 914.7" fill="none" stroke="#f4c490" stroke-width="2.6" stroke-linejoin="round" stroke-linecap="round"/>
<path d="M1301 764 C1302.7 761.3 1306.0 754.2 1311 748 C1316.0 741.8 1327.4 730.1 1330.7 726.5" fill="none" stroke="#f4c490" stroke-width="2.6" stroke-linejoin="round" stroke-linecap="round"/>
<path d="M1118 803.5 L1142.5 815" fill="none" stroke="#f4c490" stroke-width="2.6" stroke-linejoin="round" stroke-linecap="round"/>
<path d="M1150.7 898 C1152.1 902.2 1156.6 914.3 1159 923 C1161.4 931.7 1164.0 945.5 1165 950" fill="none" stroke="#f4c490" stroke-width="2.6" stroke-linejoin="round" stroke-linecap="round"/>
<path d="M1118 970 C1124.0 967.0 1143.3 957.1 1153.7 952 C1164.1 946.9 1176.0 941.6 1180.5 939.5" fill="none" stroke="#f4c490" stroke-width="2.6" stroke-linejoin="round" stroke-linecap="round"/>
<path d="M1180 712 C1181.7 716.7 1189.2 730.3 1190 740 C1190.8 749.7 1185.8 765.0 1185 770" fill="none" stroke="#f4c490" stroke-width="2.6" stroke-linejoin="round" stroke-linecap="round"/>
<path d="M1525 702 C1525.0 706.9 1523.6 722.8 1525 731.5 C1526.4 740.2 1529.9 747.2 1533.5 754 C1537.1 760.8 1542.4 766.6 1546.5 772.4 C1550.6 778.2 1552.6 784.6 1558 788.7 C1563.4 792.8 1575.5 792.4 1579 797 C1582.5 801.6 1577.8 808.3 1579 816.5 C1580.2 824.7 1582.7 838.9 1586 846 C1589.3 853.1 1596.8 856.8 1599 859" fill="none" stroke="#f4c490" stroke-width="2.6" stroke-linejoin="round" stroke-linecap="round"/>
<path d="M1599 702 C1598.4 705.3 1595.3 714.5 1595.6 721.6 C1595.8 728.7 1598.6 734.1 1600.5 744.5 C1602.4 754.9 1605.6 772.0 1607 784 C1608.4 796.0 1609.5 805.7 1608.7 816.5 C1607.9 827.3 1603.1 843.6 1602 849" fill="none" stroke="#f4c490" stroke-width="2.6" stroke-linejoin="round" stroke-linecap="round"/>
<path d="M1648 718.4 C1648.8 722.5 1648.9 736.7 1653 743 C1657.1 749.3 1666.5 750.8 1672.5 756 C1678.5 761.2 1686.2 771.0 1689 774" fill="none" stroke="#f4c490" stroke-width="2.6" stroke-linejoin="round" stroke-linecap="round"/>
<path d="M1752.7 702 C1751.6 704.7 1751.2 710.7 1746 718.4 C1740.8 726.1 1726.5 739.8 1721.6 748 C1716.7 756.2 1717.3 761.5 1716.7 767.5 C1716.1 773.5 1717.8 781.2 1718 784" fill="none" stroke="#f4c490" stroke-width="2.6" stroke-linejoin="round" stroke-linecap="round"/>
<path d="M1705 784 C1702.3 788.1 1695.8 800.8 1689 808.4 C1682.2 816.0 1673.6 824.2 1664 829.6 C1654.4 835.0 1640.8 837.8 1631.6 841 C1622.4 844.2 1612.5 847.7 1608.7 849" fill="none" stroke="#f4c490" stroke-width="2.6" stroke-linejoin="round" stroke-linecap="round"/>
<path d="M1713.5 787 C1715.1 790.6 1723.0 800.7 1723 808.4 C1723.0 816.1 1714.5 826.2 1713.5 833 C1712.5 839.8 1718.4 842.2 1716.7 849 C1715.0 855.8 1706.0 867.0 1703.6 873.8 C1701.1 880.6 1700.3 884.5 1702 890 C1703.7 895.5 1711.6 903.8 1713.5 906.5" fill="none" stroke="#f4c490" stroke-width="2.6" stroke-linejoin="round" stroke-linecap="round"/>
<path d="M1661 833 C1667.0 833.0 1682.8 834.2 1697 833 C1711.2 831.8 1735.1 828.8 1746 826 C1756.9 823.2 1759.8 818.1 1762.5 816.5" fill="none" stroke="#f4c490" stroke-width="2.6" stroke-linejoin="round" stroke-linecap="round"/>
<path d="M1754 821.5 C1755.4 824.8 1758.9 836.4 1762.5 841 C1766.1 845.6 1773.4 847.7 1775.6 849" fill="none" stroke="#f4c490" stroke-width="2.6" stroke-linejoin="round" stroke-linecap="round"/>
<path d="M1468 842.7 C1472.1 841.6 1484.3 838.2 1492.5 836 C1500.7 833.8 1511.6 831.8 1517 829.6 C1522.4 827.4 1523.7 824.1 1525 823" fill="none" stroke="#f4c490" stroke-width="2.6" stroke-linejoin="round" stroke-linecap="round"/>
<path d="M1468 901.6 C1470.7 901.0 1478.5 901.3 1484 898 C1489.5 894.7 1497.9 884.7 1500.7 882" fill="none" stroke="#f4c490" stroke-width="2.6" stroke-linejoin="round" stroke-linecap="round"/>
<path d="M1582.5 882 L1590.7 872" fill="none" stroke="#f4c490" stroke-width="2.6" stroke-linejoin="round" stroke-linecap="round"/>
<path d="M1648 895 C1653.5 896.1 1671.2 898.9 1680.7 901.6 C1690.2 904.4 1701.0 909.9 1705 911.5" fill="none" stroke="#f4c490" stroke-width="2.6" stroke-linejoin="round" stroke-linecap="round"/>
<path d="M1730 882 L1746 877" fill="none" stroke="#f4c490" stroke-width="2.6" stroke-linejoin="round" stroke-linecap="round"/>
<path d="M1795 702 C1796.4 703.3 1799.7 707.8 1803.5 710 C1807.3 712.2 1815.6 714.2 1818 715" fill="none" stroke="#f4c490" stroke-width="2.6" stroke-linejoin="round" stroke-linecap="round"/>
<path d="M1468 943 C1475.4 941.5 1500.7 938.5 1512.6 934 C1524.5 929.5 1534.9 919.0 1539.4 916" fill="none" stroke="#f4c490" stroke-width="2.6" stroke-linejoin="round" stroke-linecap="round"/>
<path d="M1664.4 970 C1667.4 973.0 1678.7 980.7 1682.3 987.7 C1685.9 994.7 1685.3 1008.0 1685.9 1012" fill="none" stroke="#f4c490" stroke-width="2.6" stroke-linejoin="round" stroke-linecap="round"/>
<path d="M1862 759 C1863.3 763.2 1868.3 777.2 1870 784 C1871.7 790.8 1868.7 795.2 1872 800 C1875.3 804.8 1885.9 809.2 1890 813 C1894.1 816.8 1896.2 817.0 1896.5 823 C1896.8 829.0 1894.3 841.9 1891.6 849 C1888.8 856.1 1884.6 860.1 1880 865.6 C1875.4 871.1 1868.9 876.6 1864 882 C1859.1 887.4 1854.3 889.7 1850.7 898 C1847.1 906.3 1845.0 922.5 1842.5 932 C1840.0 941.5 1838.8 947.8 1835.9 955 C1833.0 962.2 1826.8 971.7 1825 975" fill="none" stroke="#f4c490" stroke-width="2.6" stroke-linejoin="round" stroke-linecap="round"/>
<path d="M1818 875.5 C1823.5 874.9 1842.5 870.9 1850.7 872 C1858.9 873.1 1862.1 879.0 1867 882 C1871.9 885.0 1877.8 888.7 1880 890" fill="none" stroke="#f4c490" stroke-width="2.6" stroke-linejoin="round" stroke-linecap="round"/>
<path d="M1932.5 702 C1934.1 704.7 1936.6 711.9 1942 718.4 C1947.4 724.9 1961.2 733.4 1965 741 C1968.8 748.6 1965.8 758.0 1965 764 C1964.2 770.0 1960.8 774.8 1960 777" fill="none" stroke="#f4c490" stroke-width="2.6" stroke-linejoin="round" stroke-linecap="round"/>
<path d="M1968.5 784 C1968.5 788.8 1967.4 805.4 1968.5 813 C1969.6 820.6 1971.8 825.8 1975 829.6 C1978.2 833.4 1985.8 834.9 1988 836" fill="none" stroke="#f4c490" stroke-width="2.6" stroke-linejoin="round" stroke-linecap="round"/>
<path d="M1949 793.6 C1948.4 797.4 1947.8 807.3 1945.6 816.5 C1943.4 825.7 1937.6 841.9 1936 849 C1934.4 856.1 1936.0 857.3 1936 859" fill="none" stroke="#f4c490" stroke-width="2.6" stroke-linejoin="round" stroke-linecap="round"/>
<path d="M1993 857.5 C1993.3 861.6 1995.0 873.8 1994.7 882 C1994.5 890.2 1993.1 898.2 1991.5 906.5 C1989.9 914.8 1986.5 931.9 1985 932 C1983.5 932.1 1982.8 911.2 1982.3 907" fill="none" stroke="#f4c490" stroke-width="2.6" stroke-linejoin="round" stroke-linecap="round"/>
<path d="M2011 808.4 C2011.6 812.5 2013.1 824.8 2014.4 833 C2015.7 841.2 2017.6 849.3 2019 857.5 C2020.4 865.7 2020.6 873.8 2022.6 882 C2024.5 890.2 2028.8 898.2 2030.7 906.5 C2032.6 914.8 2031.7 924.4 2034 932 C2036.3 939.6 2043.0 948.7 2044.8 952" fill="none" stroke="#f4c490" stroke-width="2.6" stroke-linejoin="round" stroke-linecap="round"/>
<path d="M2052 784 C2054.4 789.4 2063.4 807.0 2066.7 816.5 C2070.0 826.0 2068.0 835.6 2071.6 841 C2075.2 846.4 2082.0 847.1 2088 849 C2094.0 850.9 2102.4 852.5 2107.6 852.5 C2112.8 852.5 2117.1 849.6 2119 849" fill="none" stroke="#f4c490" stroke-width="2.6" stroke-linejoin="round" stroke-linecap="round"/>
<path d="M2120.7 816.5 C2120.9 820.6 2123.3 833.4 2122 841 C2120.7 848.6 2116.9 854.2 2112.6 862.4 C2108.3 870.6 2098.8 885.4 2096 890" fill="none" stroke="#f4c490" stroke-width="2.6" stroke-linejoin="round" stroke-linecap="round"/>
<path d="M1998 739.6 C2002.1 738.8 2016.6 741.0 2022.6 734.7 C2028.6 728.4 2032.1 707.5 2034 702" fill="none" stroke="#f4c490" stroke-width="2.6" stroke-linejoin="round" stroke-linecap="round"/>
<path d="M2063.5 759 C2068.9 757.7 2085.1 753.7 2096 751 C2106.9 748.3 2123.5 744.3 2129 743" fill="none" stroke="#f4c490" stroke-width="2.6" stroke-linejoin="round" stroke-linecap="round"/>
<path d="M1818 718.4 L1847.5 738" fill="none" stroke="#f4c490" stroke-width="2.6" stroke-linejoin="round" stroke-linecap="round"/>
<path d="M1842.5 702 L1850.7 726.5" fill="none" stroke="#f4c490" stroke-width="2.6" stroke-linejoin="round" stroke-linecap="round"/>
<path d="M2050 759 C2052.2 761.0 2055.8 768.2 2063.5 770.7 C2071.2 773.2 2086.5 774.0 2096 774 C2105.5 774.0 2113.6 772.9 2120.7 770.7 C2127.8 768.5 2135.7 762.6 2138.7 761" fill="none" stroke="#f4c490" stroke-width="2.6" stroke-linejoin="round" stroke-linecap="round"/>
<path d="M1969.8 969.9 C1970.4 965.4 1971.3 953.5 1973.4 943 C1975.5 932.5 1980.8 913.0 1982.3 907" fill="none" stroke="#f4c490" stroke-width="2.6" stroke-linejoin="round" stroke-linecap="round"/>
<path d="M2078.7 925 C2079.9 929.5 2085.3 941.5 2085.9 952 C2086.5 962.5 2082.9 981.8 2082.3 987.7" fill="none" stroke="#f4c490" stroke-width="2.6" stroke-linejoin="round" stroke-linecap="round"/>
<path d="M1985 932 L1973.4 943" fill="none" stroke="#f4c490" stroke-width="2.6" stroke-linejoin="round" stroke-linecap="round"/>
<path d="M794 1021 C800.6 1020.2 821.5 1018.2 833.5 1016.4 C845.5 1014.6 856.8 1011.1 866 1010 C875.2 1008.9 885.2 1010.0 889 1010" fill="none" stroke="#f4c490" stroke-width="2.6" stroke-linejoin="round" stroke-linecap="round"/>
<path d="M825.6 1000 C826.7 1003.3 829.3 1014.7 832 1019.6 C834.7 1024.5 838.7 1023.8 842 1029.5 C845.3 1035.2 849.1 1046.1 851.8 1054 C854.5 1061.9 852.9 1070.5 858 1077 C863.1 1083.5 875.7 1087.3 882.5 1093 C889.3 1098.7 893.6 1104.7 899 1111 C904.4 1117.3 910.9 1125.0 915 1131 C919.1 1137.0 922.1 1144.6 923.5 1147.3" fill="none" stroke="#f4c490" stroke-width="2.6" stroke-linejoin="round" stroke-linecap="round"/>
<path d="M931.6 1019.6 L948 1000" fill="none" stroke="#f4c490" stroke-width="2.6" stroke-linejoin="round" stroke-linecap="round"/>
<path d="M982 1000 L980.7 1024.5" fill="none" stroke="#f4c490" stroke-width="2.6" stroke-linejoin="round" stroke-linecap="round"/>
<path d="M994 1068.7 C1001.0 1069.0 1021.8 1069.6 1036 1070.4 C1050.2 1071.2 1065.3 1074.4 1079 1073.6 C1092.7 1072.8 1111.5 1066.8 1118 1065.5" fill="none" stroke="#f4c490" stroke-width="2.6" stroke-linejoin="round" stroke-linecap="round"/>
<path d="M1088.7 1024.5 C1088.2 1028.6 1087.1 1040.8 1085.5 1049 C1083.9 1057.2 1081.2 1068.7 1079 1073.6 C1076.8 1078.5 1073.5 1077.7 1072.4 1078.5" fill="none" stroke="#f4c490" stroke-width="2.6" stroke-linejoin="round" stroke-linecap="round"/>
<path d="M910.4 1168.5 C913.9 1168.2 926.2 1166.8 931.6 1167 C937.0 1167.2 941.1 1169.5 943 1170" fill="none" stroke="#f4c490" stroke-width="2.6" stroke-linejoin="round" stroke-linecap="round"/>
<path d="M938 1170 C937.2 1174.3 935.4 1188.9 933 1196 C930.6 1203.1 925.1 1209.9 923.5 1212.7" fill="none" stroke="#f4c490" stroke-width="2.6" stroke-linejoin="round" stroke-linecap="round"/>
<path d="M980.7 1167 C980.7 1169.2 982.1 1175.2 980.7 1180 C979.4 1184.8 973.7 1190.5 972.6 1196 C971.5 1201.5 973.8 1209.9 974 1212.7" fill="none" stroke="#f4c490" stroke-width="2.6" stroke-linejoin="round" stroke-linecap="round"/>
<path d="M856 1249 C852.2 1252.6 840.3 1264.4 833.5 1270.4 C826.7 1276.4 818.1 1282.6 815 1285" fill="none" stroke="#f4c490" stroke-width="2.6" stroke-linejoin="round" stroke-linecap="round"/>
<path d="M910.4 1229.5 C909.3 1234.1 905.9 1249.1 904 1257.3 C902.1 1265.5 902.6 1271.1 899 1278.5 C895.4 1285.9 886.6 1294.2 882.5 1301.5 C878.4 1308.8 875.8 1318.6 874.4 1322" fill="none" stroke="#f4c490" stroke-width="2.6" stroke-linejoin="round" stroke-linecap="round"/>
<path d="M904 1265.5 C908.6 1266.0 924.3 1267.4 931.6 1268.7 C938.9 1270.0 945.0 1271.4 948 1273.6 C951.0 1275.8 950.9 1277.7 949.6 1281.8 C948.3 1285.9 941.6 1295.3 940 1298" fill="none" stroke="#f4c490" stroke-width="2.6" stroke-linejoin="round" stroke-linecap="round"/>
<path d="M859.6 1298 C860.7 1300.2 862.2 1308.2 866 1311 C869.8 1313.8 874.3 1313.1 882.5 1314.5 C890.7 1315.9 909.6 1318.7 915 1319.5" fill="none" stroke="#f4c490" stroke-width="2.6" stroke-linejoin="round" stroke-linecap="round"/>
<path d="M768 1110 C771.7 1113.3 783.0 1123.3 790 1130 C797.0 1136.7 806.7 1146.7 810 1150" fill="none" stroke="#f4c490" stroke-width="2.6" stroke-linejoin="round" stroke-linecap="round"/>
<path d="M1200 969.8 C1206.2 969.5 1228.1 969.9 1237.4 968 C1246.7 966.1 1248.2 962.6 1256 958.5 C1263.8 954.4 1277.2 947.0 1284 943.6 C1290.8 940.2 1294.8 938.9 1297 938" fill="none" stroke="#f4c490" stroke-width="2.6" stroke-linejoin="round" stroke-linecap="round"/>
<path d="M1244.9 977 C1245.2 982.7 1245.0 1003.5 1246.8 1011 C1248.6 1018.5 1253.5 1018.9 1256 1022 C1258.5 1025.1 1260.8 1028.3 1261.7 1029.6" fill="none" stroke="#f4c490" stroke-width="2.6" stroke-linejoin="round" stroke-linecap="round"/>
<path d="M1244.9 981 C1249.9 984.1 1265.2 993.2 1274.8 999.7 C1284.4 1006.2 1296.6 1015.0 1302.8 1020 C1309.0 1025.0 1310.5 1028.0 1312 1029.6" fill="none" stroke="#f4c490" stroke-width="2.6" stroke-linejoin="round" stroke-linecap="round"/>
<path d="M1340.3 936 C1341.8 942.2 1347.1 966.0 1349.6 973.5 C1352.0 981.0 1355.0 974.8 1355 981 C1355.0 987.2 1349.6 999.8 1349.6 1011 C1349.6 1022.2 1353.1 1039.3 1355 1048.3 C1356.9 1057.3 1359.8 1062.2 1360.8 1065" fill="none" stroke="#f4c490" stroke-width="2.6" stroke-linejoin="round" stroke-linecap="round"/>
<path d="M1340.3 936 C1348.1 937.9 1373.0 945.1 1387 947.3 C1401.0 949.5 1415.7 946.8 1424.4 949 C1433.1 951.2 1433.8 956.3 1439.4 960.4 C1445.0 964.5 1454.9 971.3 1458 973.5" fill="none" stroke="#f4c490" stroke-width="2.6" stroke-linejoin="round" stroke-linecap="round"/>
<path d="M1304.7 932.4 C1309.1 931.8 1320.4 930.2 1331 928.6 C1341.6 927.0 1359.0 925.5 1368.3 923 C1377.6 920.5 1377.7 917.4 1387 913.7 C1396.3 910.0 1412.6 903.7 1424.4 900.6 C1436.2 897.5 1452.4 895.9 1458 895" fill="none" stroke="#f4c490" stroke-width="2.6" stroke-linejoin="round" stroke-linecap="round"/>
<path d="M1368.3 880 C1370.2 884.7 1375.8 900.2 1379.5 908 C1383.2 915.8 1389.1 920.5 1390.7 926.7 C1392.3 933.0 1389.2 942.4 1388.9 945.5" fill="none" stroke="#f4c490" stroke-width="2.6" stroke-linejoin="round" stroke-linecap="round"/>
<path d="M1278.5 904.3 C1281.0 907.8 1289.5 919.7 1293.5 925 C1297.5 930.3 1301.2 934.2 1302.8 936" fill="none" stroke="#f4c490" stroke-width="2.6" stroke-linejoin="round" stroke-linecap="round"/>
<path d="M1476.8 895 C1480.5 894.4 1492.1 893.1 1499 891.2 C1505.9 889.3 1514.8 885.0 1518 883.7" fill="none" stroke="#f4c490" stroke-width="2.6" stroke-linejoin="round" stroke-linecap="round"/>
<path d="M1499 1022 C1502.2 1020.8 1511.7 1014.6 1518 1014.6 C1524.3 1014.6 1530.4 1022.0 1536.6 1022 C1542.8 1022.0 1552.2 1015.8 1555.3 1014.6" fill="none" stroke="#f4c490" stroke-width="2.6" stroke-linejoin="round" stroke-linecap="round"/>
<path d="M1450.6 1040.8 C1453.1 1038.9 1460.5 1032.7 1465.5 1029.6 C1470.5 1026.5 1474.9 1023.3 1480.5 1022 C1486.1 1020.7 1495.9 1022.0 1499 1022" fill="none" stroke="#f4c490" stroke-width="2.6" stroke-linejoin="round" stroke-linecap="round"/>
<path d="M1387 951 C1387.6 956.3 1388.5 974.8 1390.7 983 C1392.9 991.2 1398.5 997.2 1400 1000" fill="none" stroke="#f4c490" stroke-width="2.6" stroke-linejoin="round" stroke-linecap="round"/>
<path d="M1377 1079.9 C1380.0 1082.0 1384.4 1090.3 1394.8 1092.4 C1405.2 1094.5 1427.2 1093.9 1439.4 1092.4 C1451.6 1090.9 1463.2 1084.9 1468 1083.4" fill="none" stroke="#f4c490" stroke-width="2.6" stroke-linejoin="round" stroke-linecap="round"/>
<path d="M1296.6 1012 L1314.4 1022.7" fill="none" stroke="#f4c490" stroke-width="2.6" stroke-linejoin="round" stroke-linecap="round"/>
<path d="M1118 1062 C1122.5 1061.1 1137.4 1061.1 1144.8 1056.6 C1152.2 1052.1 1156.6 1040.0 1162.6 1035 C1168.5 1030.0 1177.5 1027.8 1180.5 1026.3" fill="none" stroke="#f4c490" stroke-width="2.6" stroke-linejoin="round" stroke-linecap="round"/>
<path d="M1468 1033.4 C1474.0 1032.2 1491.8 1028.4 1503.7 1026.3 C1515.6 1024.2 1533.5 1021.8 1539.4 1020.9" fill="none" stroke="#f4c490" stroke-width="2.6" stroke-linejoin="round" stroke-linecap="round"/>
<path d="M1535.9 1047.7 C1542.4 1047.7 1559.5 1048.0 1575 1047.7 C1590.5 1047.4 1619.8 1046.3 1628.7 1046" fill="none" stroke="#f4c490" stroke-width="2.6" stroke-linejoin="round" stroke-linecap="round"/>
<path d="M1637.6 1012 L1634 1038.8" fill="none" stroke="#f4c490" stroke-width="2.6" stroke-linejoin="round" stroke-linecap="round"/>
<path d="M1682.3 1012 L1691 1047.7" fill="none" stroke="#f4c490" stroke-width="2.6" stroke-linejoin="round" stroke-linecap="round"/>
<path d="M1705.5 1079.9 C1710.6 1079.0 1723.4 1076.0 1735.9 1074.5 C1748.4 1073.0 1772.2 1075.5 1780.5 1071 C1788.8 1066.5 1785.0 1051.6 1785.9 1047.7" fill="none" stroke="#f4c490" stroke-width="2.6" stroke-linejoin="round" stroke-linecap="round"/>
<path d="M1780.5 1071 C1782.0 1073.1 1786.4 1076.9 1789.4 1083.4 C1792.4 1089.9 1793.6 1104.1 1798.4 1110 C1803.2 1115.9 1814.7 1117.5 1818 1119" fill="none" stroke="#f4c490" stroke-width="2.6" stroke-linejoin="round" stroke-linecap="round"/>
<path d="M1750 1090 C1751.7 1093.3 1756.7 1103.3 1760 1110 C1763.3 1116.7 1768.3 1126.7 1770 1130" fill="none" stroke="#f4c490" stroke-width="2.6" stroke-linejoin="round" stroke-linecap="round"/>
<path d="M1200 1020 C1205.0 1021.7 1220.0 1029.2 1230 1030 C1240.0 1030.8 1255.0 1025.8 1260 1025" fill="none" stroke="#f4c490" stroke-width="2.6" stroke-linejoin="round" stroke-linecap="round"/>
<path d="M768 860 C771.5 860.2 780.8 859.1 789 861 C797.2 862.9 807.4 869.3 817 871.6 C826.6 873.9 835.6 871.4 846.5 875 C857.4 878.6 872.4 887.3 882.5 893 C892.6 898.7 898.8 905.2 907 909 C915.2 912.8 926.1 913.5 931.6 916 C937.1 918.5 937.3 921.3 940 924 C942.7 926.7 944.0 929.8 948 932 C952.0 934.2 958.0 934.0 964 937 C970.0 940.0 978.0 947.5 984 950 C990.0 952.5 992.3 952.8 1000 952 C1007.7 951.2 1025.0 946.2 1030 945" fill="none" stroke="#eb9a84" stroke-width="3" stroke-linejoin="round" stroke-linecap="round"/>
<path d="M1332 797 C1331.8 793.2 1330.9 785.8 1330.7 774 C1330.5 762.2 1331.2 738.5 1330.7 726.5 C1330.2 714.5 1328.0 706.1 1327.5 702" fill="none" stroke="#eb9a84" stroke-width="3" stroke-linejoin="round" stroke-linecap="round"/>
<path d="M1332 797 C1330.4 803.0 1326.8 822.9 1322.5 833 C1318.2 843.1 1311.2 849.9 1306 857.5 C1300.8 865.1 1294.5 875.0 1291.5 878.7 C1288.5 882.5 1288.6 879.8 1288 880" fill="none" stroke="#eb9a84" stroke-width="3" stroke-linejoin="round" stroke-linecap="round"/>
<path d="M1200 936 L1175 939.5" fill="none" stroke="#eb9a84" stroke-width="3" stroke-linejoin="round" stroke-linecap="round"/>
<path d="M1118 816.5 C1122.1 817.1 1134.3 818.4 1142.5 820 C1150.7 821.6 1161.2 827.7 1167 826 C1172.8 824.3 1171.5 811.6 1177 810 C1182.5 808.4 1189.4 813.0 1200 816.5 C1210.6 820.0 1230.6 830.5 1240.7 831 C1250.8 831.5 1252.2 822.8 1260.4 819.8 C1268.6 816.8 1278.3 816.3 1290 813 C1301.7 809.7 1319.9 803.2 1330.7 800 C1341.5 796.8 1345.5 796.3 1355 793.6 C1364.5 790.9 1377.0 786.4 1388 784 C1399.0 781.6 1409.8 778.8 1420.7 779 C1431.6 779.2 1445.6 783.7 1453.5 785.5 C1461.4 787.3 1465.6 789.2 1468 790" fill="none" stroke="#eb9a84" stroke-width="3" stroke-linejoin="round" stroke-linecap="round"/>
<path d="M1324 882 C1330.6 880.9 1352.8 878.2 1363.5 875.5 C1374.2 872.8 1379.8 868.4 1388 865.6 C1396.2 862.9 1403.0 861.8 1412.5 859 C1422.0 856.2 1435.8 851.7 1445 849 C1454.2 846.3 1458.7 845.4 1468 842.7 C1477.3 840.0 1490.6 836.8 1500.7 833 C1510.8 829.2 1520.3 824.1 1528.5 820 C1536.7 815.9 1541.0 811.7 1550 808.4 C1559.0 805.1 1568.9 801.9 1582.5 800 C1596.1 798.1 1620.7 798.7 1631.6 797 C1642.5 795.3 1639.8 792.8 1648 790 C1656.2 787.2 1671.2 782.3 1680.7 780.5 C1690.2 778.7 1698.2 778.2 1705 779 C1711.8 779.8 1714.8 783.1 1721.6 785.5 C1728.4 787.9 1738.3 791.2 1746 793.6 C1753.7 796.0 1759.3 800.0 1767.5 800 C1775.7 800.0 1787.7 795.8 1795 793.6 C1802.3 791.4 1808.8 788.1 1811.6 787" fill="none" stroke="#eb9a84" stroke-width="3" stroke-linejoin="round" stroke-linecap="round"/>
<path d="M1271.8 887 L1322.5 882" fill="none" stroke="#eb9a84" stroke-width="3" stroke-linejoin="round" stroke-linecap="round"/>
<path d="M1468 793.6 C1472.9 794.4 1488.0 794.7 1497.5 798.5 C1507.0 802.3 1520.4 813.5 1525 816.5" fill="none" stroke="#eb9a84" stroke-width="3" stroke-linejoin="round" stroke-linecap="round"/>
<path d="M1766 702 C1766.5 707.5 1768.8 721.0 1769 734.7 C1769.2 748.4 1767.8 767.6 1767.5 784 C1767.2 800.4 1766.2 822.2 1767.5 833 C1768.8 843.8 1774.2 846.3 1775.6 849" fill="none" stroke="#eb9a84" stroke-width="3" stroke-linejoin="round" stroke-linecap="round"/>
<path d="M1648 790 C1646.3 792.2 1641.3 796.9 1638 803.5 C1634.7 810.1 1631.8 822.0 1628 829.6 C1624.2 837.2 1617.2 845.8 1615 849" fill="none" stroke="#eb9a84" stroke-width="3" stroke-linejoin="round" stroke-linecap="round"/>
<path d="M1649.6 702 C1649.3 707.5 1648.0 720.0 1648 734.7 C1648.0 749.4 1649.3 780.8 1649.6 790" fill="none" stroke="#eb9a84" stroke-width="3" stroke-linejoin="round" stroke-linecap="round"/>
<path d="M1628 878.7 C1630.0 880.6 1635.3 885.4 1640 890 C1644.7 894.6 1651.2 901.6 1656 906.5 C1660.8 911.4 1664.9 915.4 1669 919.6 C1673.1 923.9 1678.8 929.9 1680.7 932" fill="none" stroke="#eb9a84" stroke-width="3" stroke-linejoin="round" stroke-linecap="round"/>
<path d="M1777.6 951 C1777.3 949.5 1778.9 944.8 1775.8 941.7 C1772.7 938.6 1765.0 935.5 1759 932.4 C1753.0 929.3 1747.2 923.6 1740 923 C1732.8 922.4 1723.2 926.8 1716 928.6 C1708.8 930.4 1703.9 930.3 1697 934 C1690.1 937.7 1684.7 944.4 1674.8 951 C1664.9 957.6 1649.9 967.0 1637.4 973.5 C1624.9 980.0 1607.4 983.6 1600 990 C1592.6 996.4 1594.2 1008.3 1593 1012" fill="none" stroke="#eb9a84" stroke-width="3" stroke-linejoin="round" stroke-linecap="round"/>
<path d="M1783.3 969.8 C1787.0 971.0 1797.3 974.8 1805.7 977 C1814.1 979.2 1824.5 979.7 1833.8 982.9 C1843.1 986.1 1854.0 994.8 1861.8 996 C1869.6 997.2 1872.7 991.9 1880.5 990 C1888.3 988.1 1899.2 985.6 1908.6 984.7 C1917.9 983.8 1927.2 983.5 1936.6 984.7 C1945.9 985.9 1954.1 991.1 1964.7 992 C1975.3 992.9 1994.1 990.3 2000 990" fill="none" stroke="#eb9a84" stroke-width="3" stroke-linejoin="round" stroke-linecap="round"/>
<path d="M1891.7 954.8 C1890.4 958.5 1885.9 970.8 1884 977 C1882.1 983.2 1884.5 987.3 1880.5 992 C1876.5 996.7 1863.4 1003.1 1860 1005.3" fill="none" stroke="#eb9a84" stroke-width="3" stroke-linejoin="round" stroke-linecap="round"/>
<path d="M1771.6 916 C1768.6 917.5 1758.2 922.0 1753.7 925 C1749.2 928.0 1746.3 932.5 1744.8 934" fill="none" stroke="#eb9a84" stroke-width="3" stroke-linejoin="round" stroke-linecap="round"/>
<path d="M1700 928.8 C1706.0 928.2 1725.5 924.1 1735.9 925 C1746.3 925.9 1755.8 931.0 1762.6 934 C1769.4 937.0 1774.9 940.0 1777 943 C1779.1 946.0 1775.3 950.5 1775 952" fill="none" stroke="#eb9a84" stroke-width="3" stroke-linejoin="round" stroke-linecap="round"/>
<path d="M1818 731.5 C1823.5 733.1 1842.5 739.9 1850.7 741 C1858.9 742.1 1861.0 742.3 1867 738 C1873.0 733.7 1881.2 721.0 1886.7 715 C1892.2 709.0 1897.8 704.2 1900 702" fill="none" stroke="#eb9a84" stroke-width="3" stroke-linejoin="round" stroke-linecap="round"/>
<path d="M2096 712 C2102.8 713.1 2127.4 715.4 2137 718.4 C2146.6 721.4 2148.3 725.9 2153.5 730 C2158.7 734.1 2165.6 740.8 2168 743" fill="none" stroke="#eb9a84" stroke-width="3" stroke-linejoin="round" stroke-linecap="round"/>
<path d="M2043.8 759 C2047.1 756.3 2057.5 748.4 2063.5 743 C2069.5 737.6 2074.6 732.0 2080 726.5 C2085.4 721.0 2093.3 712.8 2096 710" fill="none" stroke="#eb9a84" stroke-width="3" stroke-linejoin="round" stroke-linecap="round"/>
<path d="M2040.5 764 C2036.2 765.1 2022.8 769.6 2014.4 770.7 C2006.0 771.8 1995.5 770.7 1990 770.7 C1984.5 770.7 1987.1 768.5 1981.6 770.7 C1976.1 772.9 1966.6 779.6 1957 784 C1947.4 788.4 1932.2 792.2 1924 797 C1915.8 801.8 1912.0 808.7 1908 813 C1904.0 817.3 1901.3 821.3 1900 823" fill="none" stroke="#eb9a84" stroke-width="3" stroke-linejoin="round" stroke-linecap="round"/>
<path d="M2021 770.7 C2020.4 776.2 2021.4 794.8 2017.6 803.5 C2013.8 812.2 2002.3 816.8 1998 823 C1993.7 829.2 1995.6 836.7 1991.5 841 C1987.4 845.3 1980.6 846.5 1973.5 849 C1966.4 851.5 1955.8 853.8 1949 856 C1942.2 858.2 1936.6 859.1 1932.5 862.4 C1928.4 865.6 1927.2 869.6 1924.4 875.5 C1921.7 881.4 1919.3 892.0 1916 898 C1912.7 904.0 1906.6 909.2 1904.7 911.5" fill="none" stroke="#eb9a84" stroke-width="3" stroke-linejoin="round" stroke-linecap="round"/>
<path d="M2138.7 856 C2136.2 857.6 2125.6 861.3 2124 865.6 C2122.4 869.9 2127.7 875.2 2129 882 C2130.3 888.8 2132.8 898.2 2132 906.5 C2131.2 914.8 2128.1 924.4 2124 932 C2119.9 939.6 2110.4 942.7 2107.3 952 C2104.2 961.3 2105.8 981.8 2105.5 987.7" fill="none" stroke="#eb9a84" stroke-width="3" stroke-linejoin="round" stroke-linecap="round"/>
<path d="M2135.5 721.6 C2136.0 725.2 2138.2 729.9 2138.7 743 C2139.2 756.1 2139.5 782.3 2138.7 800 C2137.9 817.7 2134.6 840.8 2133.8 849" fill="none" stroke="#eb9a84" stroke-width="3" stroke-linejoin="round" stroke-linecap="round"/>
<path d="M1991.5 905 C1998.0 905.8 2018.7 910.0 2030.7 910 C2042.7 910.0 2052.6 905.6 2063.5 905 C2074.4 904.4 2078.6 906.2 2096 906.5 C2113.4 906.8 2156.0 906.5 2168 906.5" fill="none" stroke="#eb9a84" stroke-width="3" stroke-linejoin="round" stroke-linecap="round"/>
<path d="M2000 990 C2013.3 990.0 2052.0 989.8 2080 990 C2108.0 990.2 2153.3 990.8 2168 991" fill="none" stroke="#eb9a84" stroke-width="3" stroke-linejoin="round" stroke-linecap="round"/>
<path d="M1885.9 978.8 C1887.1 971.3 1891.2 946.0 1893 934 C1894.8 922.0 1896.0 911.5 1896.6 907" fill="none" stroke="#eb9a84" stroke-width="3" stroke-linejoin="round" stroke-linecap="round"/>
<path d="M768 1072 C770.7 1072.0 777.6 1075.3 784.4 1072 C791.2 1068.7 800.8 1055.4 809 1052.4 C817.2 1049.4 825.3 1052.1 833.5 1054 C841.7 1055.9 849.8 1062.7 858 1063.8 C866.2 1064.9 874.3 1061.6 882.5 1060.5 C890.7 1059.4 897.2 1057.0 907 1057 C916.8 1057.0 935.8 1059.9 941.5 1060.5" fill="none" stroke="#eb9a84" stroke-width="3" stroke-linejoin="round" stroke-linecap="round"/>
<path d="M969 1085 C968.2 1088.6 967.9 1099.3 964.4 1106.4 C960.9 1113.5 952.1 1123.0 948 1127.6 C943.9 1132.2 944.1 1129.9 940 1134 C935.9 1138.1 929.0 1147.1 923.5 1152 C918.0 1156.9 913.3 1158.1 907 1163.6 C900.7 1169.1 890.5 1178.2 885.8 1185 C881.1 1191.8 881.2 1197.0 879 1204.5 C876.8 1212.0 875.9 1225.3 872.7 1230 C869.5 1234.7 861.8 1232.2 859.6 1232.7" fill="none" stroke="#eb9a84" stroke-width="3" stroke-linejoin="round" stroke-linecap="round"/>
<path d="M967.6 1098 C966.5 1103.5 964.3 1123.3 961 1131 C957.7 1138.7 949.7 1138.6 948 1144 C946.3 1149.4 950.5 1160.3 951 1163.6" fill="none" stroke="#eb9a84" stroke-width="3" stroke-linejoin="round" stroke-linecap="round"/>
<path d="M1003.6 1016.4 C1002.5 1020.5 998.6 1034.7 997 1041 C995.4 1047.3 993.5 1049.4 994 1054 C994.5 1058.6 996.8 1060.8 1000 1068.7 C1003.2 1076.6 1011.2 1096.0 1013.5 1101.5" fill="none" stroke="#eb9a84" stroke-width="3" stroke-linejoin="round" stroke-linecap="round"/>
<path d="M1003.6 1057 C1008.0 1056.2 1020.2 1056.5 1030 1052.4 C1039.8 1048.4 1053.1 1038.2 1062.6 1032.7 C1072.1 1027.2 1077.8 1024.0 1087 1019.6 C1096.2 1015.2 1112.8 1008.7 1118 1006.5" fill="none" stroke="#eb9a84" stroke-width="3" stroke-linejoin="round" stroke-linecap="round"/>
<path d="M768 1005 C770.7 1007.4 780.6 1013.6 784.4 1019.6 C788.2 1025.6 791.6 1033.3 791 1041 C790.4 1048.7 782.7 1061.4 781 1065.5" fill="none" stroke="#eb9a84" stroke-width="3" stroke-linejoin="round" stroke-linecap="round"/>
<path d="M889 1010 C894.8 1011.8 916.4 1018.6 923.5 1021 C930.6 1023.4 930.2 1023.9 931.6 1024.5" fill="none" stroke="#eb9a84" stroke-width="3" stroke-linejoin="round" stroke-linecap="round"/>
<path d="M768 1259 C772.1 1258.7 780.8 1258.1 792.5 1257.3 C804.2 1256.5 827.2 1258.1 838.4 1254 C849.6 1249.9 851.7 1236.8 859.6 1232.7 C867.5 1228.6 877.9 1231.4 885.8 1229.5 C893.7 1227.6 896.6 1221.0 907 1221.3 C917.4 1221.5 940.7 1234.5 948 1231 C955.3 1227.5 950.5 1205.2 951 1200" fill="none" stroke="#eb9a84" stroke-width="3" stroke-linejoin="round" stroke-linecap="round"/>
<path d="M1118 1063.8 C1124.0 1061.7 1141.8 1053.7 1153.7 1051.3 C1165.6 1048.9 1174.5 1048.9 1189.4 1049.5 C1204.3 1050.1 1228.1 1052.8 1243 1054.9 C1257.9 1057.0 1266.8 1059.9 1278.7 1062 C1290.6 1064.1 1302.5 1066.8 1314.4 1067.4 C1326.3 1068.0 1339.9 1065.9 1350 1065.6 C1360.1 1065.3 1370.8 1065.6 1375 1065.6" fill="none" stroke="#eb9a84" stroke-width="3" stroke-linejoin="round" stroke-linecap="round"/>
<path d="M1593 1012 C1593.6 1016.5 1598.4 1031.4 1596.6 1038.8 C1594.8 1046.2 1584.7 1053.6 1582.3 1056.6" fill="none" stroke="#eb9a84" stroke-width="3" stroke-linejoin="round" stroke-linecap="round"/>
<path d="M1530.5 1056.6 L1530.5 1065.6" fill="none" stroke="#eb9a84" stroke-width="3" stroke-linejoin="round" stroke-linecap="round"/>
<path d="M1818 793.6 C1815.6 799.0 1808.7 816.2 1803.5 826 C1798.3 835.8 1791.7 843.2 1787 852.5 C1782.3 861.8 1780.3 873.0 1775.6 882 C1770.9 891.0 1763.3 899.7 1759 906.5 C1754.7 913.3 1751.1 920.2 1749.5 923" fill="none" stroke="#eb9a84" stroke-width="3" stroke-linejoin="round" stroke-linecap="round"/>
<path d="M1200 936 C1204.7 935.1 1218.7 932.7 1228 930.5 C1237.3 928.3 1248.2 927.4 1256 923 C1263.8 918.6 1270.1 910.2 1274.8 904.3 C1279.5 898.4 1281.8 891.5 1284 887.5 C1286.2 883.5 1287.3 881.2 1288 880" fill="none" stroke="#eb9a84" stroke-width="3" stroke-linejoin="round" stroke-linecap="round"/>
<path d="M1258 923 C1261.4 924.6 1272.0 929.9 1278.5 932.4 C1285.0 934.9 1291.4 932.1 1297 938 C1302.6 943.9 1308.2 958.3 1312 968 C1315.8 977.7 1316.5 987.3 1319.7 996 C1322.9 1004.7 1327.3 1011.9 1331 1020 C1334.7 1028.1 1337.0 1037.1 1342 1044.6 C1347.0 1052.1 1357.7 1061.6 1360.8 1065" fill="none" stroke="#eb9a84" stroke-width="3" stroke-linejoin="round" stroke-linecap="round"/>
<path d="M1360.8 1065 C1363.3 1064.1 1369.6 1063.2 1375.8 1059.5 C1382.0 1055.8 1389.9 1048.0 1398 1042.7 C1406.1 1037.4 1416.3 1033.0 1424.4 1027.7 C1432.5 1022.4 1440.2 1017.5 1446.8 1011 C1453.3 1004.5 1458.7 994.8 1463.7 988.5 C1468.7 982.2 1470.9 979.1 1476.8 973.5 C1482.7 967.9 1490.3 961.6 1499 954.8 C1507.7 947.9 1519.6 939.2 1529 932.4 C1538.4 925.5 1546.2 920.6 1555.3 913.7 C1564.4 906.8 1578.7 895.0 1583.4 891.2" fill="none" stroke="#eb9a84" stroke-width="3" stroke-linejoin="round" stroke-linecap="round"/>
<path d="M1450.6 1040.8 C1455.6 1040.8 1470.8 1039.5 1480.5 1040.8 C1490.2 1042.0 1499.2 1046.4 1508.6 1048.3 C1517.9 1050.2 1527.2 1053.2 1536.6 1052 C1545.9 1050.8 1554.1 1044.5 1564.7 1040.8 C1575.3 1037.1 1594.1 1031.5 1600 1029.6" fill="none" stroke="#eb9a84" stroke-width="3" stroke-linejoin="round" stroke-linecap="round"/>
<path d="M1469.3 988.5 C1473.7 992.9 1488.0 1004.6 1495.5 1014.6 C1503.0 1024.6 1507.8 1039.6 1514 1048.3 C1520.2 1057.0 1529.8 1063.9 1533 1067" fill="none" stroke="#eb9a84" stroke-width="3" stroke-linejoin="round" stroke-linecap="round"/>
<path d="M1529 1052 C1533.4 1047.7 1549.0 1032.7 1555.3 1025.9 C1561.5 1019.1 1564.6 1013.5 1566.5 1011" fill="none" stroke="#eb9a84" stroke-width="3" stroke-linejoin="round" stroke-linecap="round"/>
<path d="M1549.7 1063 L1600 1057.7" fill="none" stroke="#eb9a84" stroke-width="3" stroke-linejoin="round" stroke-linecap="round"/>
<path d="M1461.8 880 L1460 898.7" fill="none" stroke="#eb9a84" stroke-width="3" stroke-linejoin="round" stroke-linecap="round"/>
<path d="M1818 787 C1823.5 783.8 1842.5 773.8 1850.7 767.5 C1858.9 761.2 1858.8 753.6 1867 749.5 C1875.2 745.4 1889.1 745.5 1900 743 C1910.9 740.5 1921.7 737.5 1932.5 734.7 C1943.3 732.0 1955.4 730.6 1965 726.5 C1974.6 722.4 1984.5 714.1 1990 710 C1995.5 705.9 1996.7 703.3 1998 702" fill="none" stroke="#eb9a84" stroke-width="3" stroke-linejoin="round" stroke-linecap="round"/>
<path d="M1033 947 C1036.5 945.3 1046.3 940.8 1054 937 C1061.7 933.2 1068.3 928.1 1079 924 C1089.7 919.9 1108.2 916.8 1118 912.5 C1127.8 908.2 1132.7 903.1 1137.6 898 C1142.5 892.9 1143.9 888.8 1147.5 882 C1151.1 875.2 1156.0 864.0 1159 857.5 C1162.0 851.0 1163.1 848.0 1165.5 842.7 C1167.9 837.5 1172.2 833.1 1173.6 826 C1174.9 818.9 1172.5 809.2 1173.6 800 C1174.7 790.8 1177.8 778.0 1180 770.7 C1182.2 763.4 1184.5 759.8 1186.7 756 C1188.9 752.2 1190.3 753.5 1193 748 C1195.7 742.5 1201.0 730.7 1203 723 C1205.0 715.3 1204.4 705.5 1204.7 702" fill="none" stroke="#e9907c" stroke-width="4.5" stroke-linejoin="round" stroke-linecap="round"/>
<path d="M769 857 C770.8 858.1 776.2 857.8 779.5 863.5 C782.8 869.2 784.9 884.8 789 891 C793.1 897.2 800.2 895.8 804 901 C807.8 906.2 808.2 917.3 812 922 C815.8 926.7 822.9 923.8 827 929 C831.1 934.2 833.2 947.8 836.7 953.5 C840.2 959.2 843.1 958.4 848 963 C852.9 967.6 858.7 972.8 866 981 C873.3 989.2 887.7 1006.8 892 1012" fill="none" stroke="#8d8d8d" stroke-width="3.2" stroke-linejoin="round" stroke-linecap="round"/>
<path d="M990.5 780 C992.9 781.7 999.2 785.2 1005 790 C1010.8 794.8 1019.5 807.3 1025 808.6 C1030.5 809.9 1033.9 799.8 1038 798 C1042.1 796.2 1047.0 796.3 1049.5 798 C1052.0 799.7 1050.5 804.5 1052.7 808 C1054.9 811.5 1059.0 814.4 1062.6 819 C1066.1 823.6 1069.9 829.6 1074 835.6 C1078.1 841.6 1083.5 849.0 1087 855 C1090.5 861.0 1092.0 866.4 1095 871.6 C1098.0 876.8 1101.2 883.8 1105 886.4 C1108.8 889.0 1115.8 886.9 1118 887" fill="none" stroke="#8d8d8d" stroke-width="3.2" stroke-linejoin="round" stroke-linecap="round"/>
<path d="M1105 888 C1102.0 890.7 1094.1 898.0 1087 904 C1079.9 910.0 1069.4 918.5 1062.6 924 C1055.8 929.5 1050.9 932.9 1046 937 C1041.1 941.1 1036.5 944.2 1033 948.5 C1029.5 952.8 1026.9 956.8 1025 963 C1023.1 969.2 1023.5 977.8 1021.6 986 C1019.7 994.2 1014.9 1007.7 1013.5 1012" fill="none" stroke="#8d8d8d" stroke-width="3.2" stroke-linejoin="round" stroke-linecap="round"/>
<path d="M1178.5 702 C1177.8 704.2 1175.2 706.8 1174.5 715 C1173.8 723.2 1174.9 738.2 1174.5 751 C1174.1 763.8 1173.0 781.1 1172 792 C1171.0 802.9 1169.5 809.7 1168.7 816.5 C1167.9 823.3 1166.2 828.4 1167 833 C1167.8 837.6 1172.3 840.3 1173.6 844.4 C1174.9 848.5 1174.8 855.3 1175 857.5" fill="none" stroke="#8d8d8d" stroke-width="3.2" stroke-linejoin="round" stroke-linecap="round"/>
<path d="M1118 887 C1122.1 885.6 1134.3 880.6 1142.5 878.7 C1150.7 876.8 1157.4 876.0 1167 875.5 C1176.6 875.0 1186.3 875.0 1200 875.5 C1213.7 876.0 1238.2 880.4 1249 878.7 C1259.8 877.1 1260.2 867.2 1265 865.6 C1269.8 864.0 1272.5 870.1 1278 869 C1283.5 867.9 1288.4 862.8 1298 859 C1307.6 855.2 1324.7 849.8 1335.6 846 C1346.5 842.2 1356.1 839.8 1363.5 836 C1370.9 832.2 1374.8 829.0 1380 823 C1385.2 817.0 1390.2 806.8 1395 800 C1399.8 793.2 1405.2 788.0 1409 782 C1412.8 776.0 1412.8 768.7 1417.5 764 C1422.2 759.3 1430.8 756.4 1437 754 C1443.2 751.6 1449.8 751.1 1455 749.5 C1460.2 747.9 1465.8 745.3 1468 744.5" fill="none" stroke="#8d8d8d" stroke-width="3.2" stroke-linejoin="round" stroke-linecap="round"/>
<path d="M1335.6 846 C1334.0 850.9 1328.8 865.4 1326 875.5 C1323.2 885.6 1321.5 897.1 1319 906.5 C1316.5 915.9 1313.2 927.4 1311 932 C1308.8 936.6 1306.4 933.7 1305.5 934" fill="none" stroke="#8d8d8d" stroke-width="3.2" stroke-linejoin="round" stroke-linecap="round"/>
<path d="M1468 878.7 C1461.5 879.0 1441.0 878.5 1429 880.4 C1417.0 882.3 1406.9 886.2 1396 890 C1385.1 893.8 1371.7 898.9 1363.5 903 C1355.3 907.1 1352.2 909.5 1347 914.7 C1341.8 919.9 1338.9 929.6 1332 934 C1325.1 938.4 1311.4 938.0 1305.5 941 C1299.6 944.0 1301.1 947.8 1296.6 952 C1292.1 956.2 1287.6 962.4 1278.7 966 C1269.8 969.6 1251.3 971.9 1243 973.4 C1234.7 974.9 1232.9 972.6 1228.7 975 C1224.5 977.4 1224.5 985.0 1218 987.7 C1211.5 990.4 1196.0 988.0 1189.4 991 C1182.9 994.0 1181.1 1002.1 1178.7 1005.6 C1176.3 1009.1 1175.6 1010.9 1175 1012" fill="none" stroke="#8d8d8d" stroke-width="3.2" stroke-linejoin="round" stroke-linecap="round"/>
<path d="M1307.3 943 C1309.1 945.7 1315.9 951.5 1318 959 C1320.1 966.5 1320.4 978.9 1319.8 987.7 C1319.2 996.5 1315.3 1008.0 1314.4 1012" fill="none" stroke="#8d8d8d" stroke-width="3.2" stroke-linejoin="round" stroke-linecap="round"/>
<path d="M1445 702 C1446.2 703.7 1450.3 706.5 1452 712 C1453.7 717.5 1455.0 727.4 1455 734.7 C1455.0 742.0 1451.2 749.2 1452 756 C1452.8 762.8 1457.3 771.3 1460 775.6 C1462.7 779.9 1466.7 780.9 1468 782" fill="none" stroke="#8d8d8d" stroke-width="3.2" stroke-linejoin="round" stroke-linecap="round"/>
<path d="M1468 743 C1473.5 741.3 1491.7 734.8 1500.7 733 C1509.7 731.2 1515.2 735.5 1522 732 C1528.8 728.5 1534.3 715.9 1541.6 712 C1548.9 708.1 1556.4 709.7 1566 708.5 C1575.6 707.3 1591.3 706.1 1599 705 C1606.7 703.9 1609.8 702.5 1612 702" fill="none" stroke="#8d8d8d" stroke-width="3.2" stroke-linejoin="round" stroke-linecap="round"/>
<path d="M1468 782 C1470.2 783.3 1476.7 786.4 1481 790 C1485.3 793.6 1488.5 799.1 1494 803.5 C1499.5 807.9 1506.9 813.2 1514 816.5 C1521.1 819.8 1529.1 821.1 1536.7 823 C1544.3 824.9 1554.1 825.0 1559.6 828 C1565.1 831.0 1566.3 836.7 1569.5 841 C1572.7 845.3 1577.4 851.8 1579 854" fill="none" stroke="#8d8d8d" stroke-width="3.2" stroke-linejoin="round" stroke-linecap="round"/>
<path d="M1468 875.5 C1473.5 873.9 1491.7 869.2 1500.7 865.6 C1509.7 862.0 1515.2 856.2 1522 854 C1528.8 851.8 1535.3 852.8 1541.6 852.5 C1547.9 852.2 1553.4 852.2 1559.6 852.5 C1565.8 852.8 1575.8 853.8 1579 854" fill="none" stroke="#8d8d8d" stroke-width="3.2" stroke-linejoin="round" stroke-linecap="round"/>
<path d="M1608.7 852.5 C1611.2 849.2 1617.0 839.6 1623.5 833 C1630.0 826.4 1639.8 818.5 1648 813 C1656.2 807.5 1664.3 804.6 1672.5 800 C1680.7 795.4 1688.8 789.8 1697 785.5 C1705.2 781.2 1712.1 777.8 1721.6 774 C1731.1 770.2 1743.1 765.5 1754 762.5 C1764.9 759.5 1776.3 757.9 1787 756 C1797.7 754.1 1812.8 751.8 1818 751" fill="none" stroke="#8d8d8d" stroke-width="3.2" stroke-linejoin="round" stroke-linecap="round"/>
<path d="M1621.8 872 C1624.8 872.8 1630.2 875.9 1640 877 C1649.8 878.1 1671.2 877.0 1680.7 878.7 C1690.2 880.4 1692.1 883.2 1697 887 C1701.9 890.8 1707.2 898.7 1710 901.6 C1712.8 904.5 1712.7 897.0 1714 904.3 C1715.3 911.6 1718.1 937.7 1717.8 945.5 C1717.5 953.3 1714.8 947.2 1712 951 C1709.2 954.8 1701.6 962.4 1701 968 C1700.4 973.6 1707.9 979.4 1708.5 984.7 C1709.1 990.0 1708.8 994.7 1704.7 999.7 C1700.6 1004.7 1687.5 1012.1 1684 1014.6" fill="none" stroke="#8d8d8d" stroke-width="3.2" stroke-linejoin="round" stroke-linecap="round"/>
<path d="M1818 764 C1815.6 766.2 1807.3 770.4 1803.5 777 C1799.7 783.6 1797.8 795.3 1795 803.5 C1792.2 811.7 1789.7 818.4 1787 826 C1784.3 833.6 1781.2 840.8 1779 849 C1776.8 857.2 1775.1 867.3 1774 875.5 C1772.9 883.7 1774.0 891.0 1772.4 898 C1770.8 905.0 1768.4 908.9 1764.6 917.4 C1760.8 925.9 1752.1 943.7 1749.6 949" fill="none" stroke="#8d8d8d" stroke-width="3.2" stroke-linejoin="round" stroke-linecap="round"/>
<path d="M1716 904.3 C1721.6 904.0 1741.5 900.2 1749.6 902.4 C1757.7 904.6 1762.1 914.9 1764.6 917.4" fill="none" stroke="#8d8d8d" stroke-width="3.2" stroke-linejoin="round" stroke-linecap="round"/>
<path d="M1762.7 923 C1768.2 927.3 1787.3 942.2 1796 949 C1804.7 955.8 1811.2 958.7 1815 964 C1818.8 969.3 1818.2 978.2 1818.8 981" fill="none" stroke="#8d8d8d" stroke-width="3.2" stroke-linejoin="round" stroke-linecap="round"/>
<path d="M1764.6 969.8 C1768.3 969.5 1778.0 965.5 1787 968 C1796.0 970.5 1809.5 981.3 1818.8 984.7 C1828.1 988.1 1834.3 987.0 1843 988.5 C1851.7 990.0 1862.2 994.3 1871 994 C1879.8 993.7 1887.7 987.8 1895.5 986.6 C1903.3 985.4 1914.2 986.6 1918 986.6" fill="none" stroke="#8d8d8d" stroke-width="3.2" stroke-linejoin="round" stroke-linecap="round"/>
<path d="M1871 994 L1869.3 1009" fill="none" stroke="#8d8d8d" stroke-width="3.2" stroke-linejoin="round" stroke-linecap="round"/>
<path d="M1680.4 1018.4 L1699 1042.7" fill="none" stroke="#8d8d8d" stroke-width="3.2" stroke-linejoin="round" stroke-linecap="round"/>
<path d="M1818 762.5 C1820.7 761.1 1827.6 757.4 1834.4 754.4 C1841.2 751.4 1845.4 747.2 1859 744.5 C1872.6 741.8 1895.6 740.6 1916 738 C1936.4 735.4 1969.3 730.9 1981.6 729 C1993.9 727.1 1979.1 727.7 1990 726.5 C2000.9 725.3 2032.0 725.7 2047 721.6 C2062.0 717.5 2074.5 705.3 2080 702" fill="none" stroke="#8d8d8d" stroke-width="3.2" stroke-linejoin="round" stroke-linecap="round"/>
<path d="M1962 702 C1965.3 705.3 1976.9 717.3 1981.6 721.6 C1986.3 725.9 1988.3 723.6 1990 728 C1991.7 732.4 1990.2 743.3 1991.5 748 C1992.8 752.7 1989.3 754.2 1998 756 C2006.7 757.8 2035.9 755.5 2043.8 759 C2051.7 762.5 2039.5 773.4 2045.5 777 C2051.5 780.6 2068.8 782.1 2080 780.5 C2091.2 778.9 2103.1 770.5 2112.6 767.5 C2122.1 764.5 2127.8 764.1 2137 762.5 C2146.2 760.9 2162.8 758.4 2168 757.6" fill="none" stroke="#8d8d8d" stroke-width="3.2" stroke-linejoin="round" stroke-linecap="round"/>
<path d="M2047 721.6 L2043.8 759" fill="none" stroke="#8d8d8d" stroke-width="3.2" stroke-linejoin="round" stroke-linecap="round"/>
<path d="M2045.5 777 C2043.0 779.8 2034.5 787.6 2030.7 793.6 C2026.9 799.6 2024.5 807.6 2022.6 813 C2020.6 818.4 2023.1 820.5 2019 826 C2014.9 831.5 2004.2 841.6 1998 846 C1991.8 850.4 1987.1 850.3 1981.6 852.5 C1976.1 854.7 1973.2 855.4 1965 859 C1956.8 862.6 1940.7 868.0 1932.5 874 C1924.3 880.0 1920.4 888.2 1916 895 C1911.6 901.8 1907.9 908.5 1906 914.7 C1904.1 920.9 1904.5 924.3 1904.7 932 C1904.9 939.7 1907.8 952.0 1907.3 961 C1906.8 970.0 1902.9 981.8 1902 986" fill="none" stroke="#8d8d8d" stroke-width="3.2" stroke-linejoin="round" stroke-linecap="round"/>
<path d="M1991.5 748 C1989.8 749.3 1984.6 752.2 1981.6 756 C1978.6 759.8 1978.9 765.0 1973.5 770.7 C1968.1 776.4 1957.2 785.1 1949 790 C1940.8 794.9 1932.2 795.0 1924 800 C1915.8 805.0 1906.8 814.5 1900 820 C1893.2 825.5 1889.0 829.5 1883.5 833 C1878.0 836.5 1872.5 838.0 1867 841 C1861.5 844.0 1856.1 849.3 1850.7 851 C1845.3 852.7 1839.9 850.8 1834.4 851 C1829.0 851.2 1820.7 852.2 1818 852.5" fill="none" stroke="#8d8d8d" stroke-width="3.2" stroke-linejoin="round" stroke-linecap="round"/>
<path d="M2129 702 C2126.3 705.3 2117.3 716.1 2112.6 721.6 C2107.9 727.1 2106.4 731.1 2101 734.7 C2095.6 738.3 2087.7 740.0 2080 743 C2072.3 746.0 2060.8 750.0 2055 752.7 C2049.2 755.4 2047.1 758.0 2045.5 759" fill="none" stroke="#8d8d8d" stroke-width="3.2" stroke-linejoin="round" stroke-linecap="round"/>
<path d="M2168 702 C2162.8 705.3 2142.7 716.1 2137 721.6 C2131.3 727.1 2133.8 727.6 2133.8 734.7 C2133.8 741.8 2135.1 756.4 2137 764 C2138.9 771.6 2145.0 774.5 2145 780.5 C2145.0 786.5 2138.9 794.0 2137 800 C2135.1 806.0 2133.5 808.3 2133.8 816.5 C2134.1 824.7 2137.9 840.8 2138.7 849 C2139.5 857.2 2140.9 862.0 2138.7 865.6 C2136.5 869.2 2132.7 866.4 2125.6 870.5 C2118.5 874.6 2103.6 884.0 2096 890 C2088.4 896.0 2085.4 899.5 2080 906.5 C2074.6 913.5 2067.6 923.9 2063.5 932 C2059.4 940.1 2056.6 945.7 2055.5 955 C2054.4 964.3 2056.8 982.2 2057 987.7" fill="none" stroke="#8d8d8d" stroke-width="3.2" stroke-linejoin="round" stroke-linecap="round"/>
<path d="M2138.7 859 L2168 842.7" fill="none" stroke="#8d8d8d" stroke-width="3.2" stroke-linejoin="round" stroke-linecap="round"/>
<path d="M1870 702 C1870.0 705.8 1870.5 717.7 1870 724.5 C1869.5 731.3 1867.5 739.9 1867 743" fill="none" stroke="#8d8d8d" stroke-width="3.2" stroke-linejoin="round" stroke-linecap="round"/>
<path d="M1818 980.6 C1826.9 981.8 1856.8 987.1 1871.6 987.7 C1886.4 988.3 1890.6 982.5 1907 984 C1923.4 985.5 1946.0 994.2 1969.8 996.6 C1993.6 999.0 2027.7 998.1 2050 998.4 C2072.3 998.7 2084.0 999.3 2103.7 998.4 C2123.4 997.5 2157.3 993.9 2168 993" fill="none" stroke="#8d8d8d" stroke-width="3.2" stroke-linejoin="round" stroke-linecap="round"/>
<path d="M768 1093 C770.7 1087.8 777.6 1069.0 784.4 1062 C791.2 1055.0 803.1 1056.1 809 1050.7 C814.9 1045.3 817.3 1033.6 820 1029.5 C822.7 1025.4 820.0 1026.6 825 1026 C830.0 1025.4 838.8 1026.5 850 1026 C861.2 1025.5 883.8 1022.4 892 1023 C900.2 1023.6 892.4 1028.7 899 1029.5 C905.6 1030.3 923.4 1027.5 931.6 1027.8 C939.8 1028.0 943.1 1028.5 948 1031 C952.9 1033.5 958.3 1038.7 961 1042.5 C963.7 1046.3 963.8 1052.1 964.4 1054" fill="none" stroke="#8d8d8d" stroke-width="3.2" stroke-linejoin="round" stroke-linecap="round"/>
<path d="M964.4 1046 C967.1 1043.2 975.3 1034.7 980.7 1029.5 C986.1 1024.3 991.5 1018.8 997 1014.7 C1002.5 1010.6 1009.7 1007.5 1013.5 1005 C1017.3 1002.5 1018.2 1002.5 1020 1000 C1021.8 997.5 1023.3 991.7 1024 990" fill="none" stroke="#8d8d8d" stroke-width="3.2" stroke-linejoin="round" stroke-linecap="round"/>
<path d="M980.7 1054 C986.2 1052.7 1004.0 1049.8 1013.5 1046 C1023.0 1042.2 1031.2 1034.6 1038 1031 C1044.8 1027.4 1046.2 1026.4 1054.4 1024.5 C1062.6 1022.6 1078.8 1021.2 1087 1019.6 C1095.2 1018.0 1098.3 1015.5 1103.5 1014.7 C1108.7 1013.9 1113.2 1012.2 1118 1014.7 C1122.8 1017.2 1127.5 1026.0 1132 1030 C1136.5 1034.0 1140.8 1038.4 1145 1039 C1149.2 1039.6 1152.6 1037.9 1157 1033.4 C1161.4 1028.9 1169.2 1015.6 1171.6 1012" fill="none" stroke="#8d8d8d" stroke-width="3.2" stroke-linejoin="round" stroke-linecap="round"/>
<path d="M972.6 1068.7 C976.7 1073.6 992.4 1090.4 997 1098 C1001.6 1105.6 999.2 1109.0 1000 1114.5 C1000.8 1120.0 1003.0 1126.1 1002 1131 C1001.0 1135.9 996.7 1138.8 994 1144 C991.3 1149.2 990.5 1158.7 985.6 1162 C980.7 1165.3 970.9 1162.5 964.4 1163.6 C957.9 1164.7 949.1 1165.3 946.4 1168.5 C943.7 1171.7 945.0 1178.4 948 1183 C951.0 1187.6 961.4 1191.0 964.4 1196 C967.4 1201.0 966.8 1207.0 966 1212.7 C965.2 1218.4 960.6 1224.0 959.5 1230 C958.4 1236.0 960.6 1243.7 959.5 1249 C958.4 1254.3 953.8 1257.3 953 1262 C952.2 1266.7 954.2 1274.5 954.5 1277" fill="none" stroke="#8d8d8d" stroke-width="3.2" stroke-linejoin="round" stroke-linecap="round"/>
<path d="M925 1147.3 C927.5 1150.0 936.2 1157.6 940 1163.6 C943.8 1169.5 949.4 1177.0 948 1183 C946.6 1189.0 936.5 1194.6 931.6 1199.6 C926.7 1204.5 921.8 1207.6 918.5 1212.7 C915.2 1217.8 912.0 1229.4 912 1230 C912.0 1230.6 916.6 1220.3 918.5 1216.4 C920.4 1212.5 922.7 1208.2 923.5 1206.5" fill="none" stroke="#8d8d8d" stroke-width="3.2" stroke-linejoin="round" stroke-linecap="round"/>
<path d="M768 1252.4 C773.5 1251.6 793.4 1249.2 800.7 1247.5 C808.0 1245.8 808.0 1242.2 812 1242.5 C816.0 1242.8 820.1 1247.9 825 1249 C829.9 1250.1 836.9 1250.3 841.6 1249 C846.3 1247.7 850.3 1243.7 853 1241 C855.7 1238.3 854.4 1234.9 858 1232.7 C861.6 1230.5 865.7 1228.6 874.4 1227.8 C883.1 1227.0 903.0 1229.7 910.4 1227.8 C917.8 1225.9 917.1 1218.3 918.5 1216.4" fill="none" stroke="#8d8d8d" stroke-width="3.2" stroke-linejoin="round" stroke-linecap="round"/>
<path d="M1312.6 1012 C1314.4 1015.6 1318.7 1027.5 1323.4 1033.4 C1328.1 1039.4 1335.1 1043.3 1341 1047.7 C1346.9 1052.1 1354.5 1056.5 1359 1060 C1363.5 1063.5 1359.1 1066.9 1368 1069 C1376.9 1071.1 1400.7 1070.3 1412.6 1072.7 C1424.5 1075.1 1430.2 1081.4 1439.4 1083.4 C1448.6 1085.5 1460.2 1086.2 1468 1085 C1475.8 1083.8 1480.0 1079.8 1485.9 1076.3 C1491.9 1072.8 1496.3 1067.1 1503.7 1063.8 C1511.1 1060.5 1519.8 1058.1 1530.5 1056.6 C1541.2 1055.1 1553.1 1056.4 1568 1054.9 C1582.9 1053.4 1604.2 1050.4 1619.8 1047.7 C1635.4 1045.0 1651.0 1044.5 1661.7 1039 C1672.4 1033.5 1680.3 1018.7 1684 1014.6" fill="none" stroke="#8d8d8d" stroke-width="3.2" stroke-linejoin="round" stroke-linecap="round"/>
<path d="M1368 1069 C1367.1 1071.4 1364.4 1079.6 1362.6 1083.4 C1360.8 1087.2 1357.9 1090.6 1357 1092" fill="none" stroke="#8d8d8d" stroke-width="3.2" stroke-linejoin="round" stroke-linecap="round"/>
<path d="M1478.7 1085 C1482.9 1088.3 1497.2 1099.2 1503.7 1104.9 C1510.2 1110.6 1511.2 1115.4 1518 1119 C1524.8 1122.6 1540.3 1125.1 1544.8 1126.3" fill="none" stroke="#8d8d8d" stroke-width="3.2" stroke-linejoin="round" stroke-linecap="round"/>
<text x="798" y="711" font-size="22" fill="#6a9bd0" textLength="86" lengthAdjust="spacingAndGlyphs" font-style="italic" stroke="#f4f3ee" stroke-width="3" stroke-linejoin="round" opacity="0.85">Channel</text><text x="798" y="711" font-size="22" fill="#6a9bd0" textLength="86" lengthAdjust="spacingAndGlyphs" font-style="italic">Channel</text>
<text x="911" y="808" font-size="21" fill="#5ea65e" textLength="64" lengthAdjust="spacingAndGlyphs" font-style="italic" font-weight="400" stroke="#f4f3ee" stroke-width="3" stroke-linejoin="round" opacity="0.85">Exmoor</text><text x="911" y="808" font-size="21" fill="#5ea65e" textLength="64" lengthAdjust="spacingAndGlyphs" font-style="italic" font-weight="400" stroke-width="0.7" stroke="#5ea65e">Exmoor</text>
<text x="906" y="831" font-size="21" fill="#5ea65e" textLength="75" lengthAdjust="spacingAndGlyphs" font-style="italic" font-weight="400" stroke="#f4f3ee" stroke-width="3" stroke-linejoin="round" opacity="0.85">National</text><text x="906" y="831" font-size="21" fill="#5ea65e" textLength="75" lengthAdjust="spacingAndGlyphs" font-style="italic" font-weight="400" stroke-width="0.7" stroke="#5ea65e">National</text>
<text x="924" y="854" font-size="21" fill="#5ea65e" textLength="39" lengthAdjust="spacingAndGlyphs" font-style="italic" font-weight="400" stroke="#f4f3ee" stroke-width="3" stroke-linejoin="round" opacity="0.85">Park</text><text x="924" y="854" font-size="21" fill="#5ea65e" textLength="39" lengthAdjust="spacingAndGlyphs" font-style="italic" font-weight="400" stroke-width="0.7" stroke="#5ea65e">Park</text>
<text x="1268" y="787.5" font-size="20" fill="#555" textLength="49" lengthAdjust="spacingAndGlyphs" stroke="#f4f3ee" stroke-width="3" stroke-linejoin="round" opacity="0.85">Wells</text><text x="1268" y="787.5" font-size="20" fill="#555" textLength="49" lengthAdjust="spacingAndGlyphs" stroke="#555" stroke-width="0.9">Wells</text>
<text x="1160" y="871.5" font-size="20" fill="#8e8e8e" textLength="52" lengthAdjust="spacingAndGlyphs" stroke="#f4f3ee" stroke-width="3" stroke-linejoin="round" opacity="0.85">South</text><text x="1160" y="871.5" font-size="20" fill="#8e8e8e" textLength="52" lengthAdjust="spacingAndGlyphs">South</text>
<text x="1122" y="895" font-size="20" fill="#8e8e8e" textLength="128" lengthAdjust="spacingAndGlyphs" stroke="#f4f3ee" stroke-width="3" stroke-linejoin="round" opacity="0.85">West England</text><text x="1122" y="895" font-size="20" fill="#8e8e8e" textLength="128" lengthAdjust="spacingAndGlyphs">West England</text>
<text x="1560" y="873" font-size="20" fill="#555" textLength="84" lengthAdjust="spacingAndGlyphs" stroke="#f4f3ee" stroke-width="3" stroke-linejoin="round" opacity="0.85">Salisbury</text><text x="1560" y="873" font-size="20" fill="#555" textLength="84" lengthAdjust="spacingAndGlyphs" stroke="#555" stroke-width="0.9">Salisbury</text>
<text x="1726" y="874" font-size="20" fill="#555" textLength="107" lengthAdjust="spacingAndGlyphs" stroke="#f4f3ee" stroke-width="3" stroke-linejoin="round" opacity="0.85">Winchester</text><text x="1726" y="874" font-size="20" fill="#555" textLength="107" lengthAdjust="spacingAndGlyphs" stroke="#555" stroke-width="0.9">Winchester</text>
<text x="1680" y="966" font-size="20" fill="#555" textLength="128" lengthAdjust="spacingAndGlyphs" stroke="#f4f3ee" stroke-width="3" stroke-linejoin="round" opacity="0.85">Southampton</text><text x="1680" y="966" font-size="20" fill="#555" textLength="128" lengthAdjust="spacingAndGlyphs" stroke="#555" stroke-width="0.9">Southampton</text>
<text x="1808" y="1022" font-size="20" fill="#555" textLength="111" lengthAdjust="spacingAndGlyphs" stroke="#f4f3ee" stroke-width="3" stroke-linejoin="round" opacity="0.85">Portsmouth</text><text x="1808" y="1022" font-size="20" fill="#555" textLength="111" lengthAdjust="spacingAndGlyphs" stroke="#555" stroke-width="0.9">Portsmouth</text>
<text x="943" y="1068" font-size="20" fill="#555" textLength="57" lengthAdjust="spacingAndGlyphs" stroke="#f4f3ee" stroke-width="3" stroke-linejoin="round" opacity="0.85">Exeter</text><text x="943" y="1068" font-size="20" fill="#555" textLength="57" lengthAdjust="spacingAndGlyphs" stroke="#555" stroke-width="0.9">Exeter</text>
<text x="1878" y="907" font-size="21" fill="#5ea65e" textLength="113" lengthAdjust="spacingAndGlyphs" font-style="italic" font-weight="400" stroke="#f4f3ee" stroke-width="3" stroke-linejoin="round" opacity="0.85">South Downs</text><text x="1878" y="907" font-size="21" fill="#5ea65e" textLength="113" lengthAdjust="spacingAndGlyphs" font-style="italic" font-weight="400" stroke-width="0.7" stroke="#5ea65e">South Downs</text>
<text x="1897" y="930.5" font-size="21" fill="#5ea65e" textLength="76" lengthAdjust="spacingAndGlyphs" font-style="italic" font-weight="400" stroke="#f4f3ee" stroke-width="3" stroke-linejoin="round" opacity="0.85">National</text><text x="1897" y="930.5" font-size="21" fill="#5ea65e" textLength="76" lengthAdjust="spacingAndGlyphs" font-style="italic" font-weight="400" stroke-width="0.7" stroke="#5ea65e">National</text>
<text x="1915" y="954" font-size="21" fill="#5ea65e" textLength="40" lengthAdjust="spacingAndGlyphs" font-style="italic" font-weight="400" stroke="#f4f3ee" stroke-width="3" stroke-linejoin="round" opacity="0.85">Park</text><text x="1915" y="954" font-size="21" fill="#5ea65e" textLength="40" lengthAdjust="spacingAndGlyphs" font-style="italic" font-weight="400" stroke-width="0.7" stroke="#5ea65e">Park</text>
<text x="1242" y="1041.5" font-size="21" fill="#5ea65e" textLength="57" lengthAdjust="spacingAndGlyphs" font-style="italic" font-weight="400" stroke="#f4f3ee" stroke-width="3" stroke-linejoin="round" opacity="0.85">Dorset</text><text x="1242" y="1041.5" font-size="21" fill="#5ea65e" textLength="57" lengthAdjust="spacingAndGlyphs" font-style="italic" font-weight="400" stroke-width="0.7" stroke="#5ea65e">Dorset</text>
<text x="1245" y="1065.5" font-size="21" fill="#5ea65e" textLength="52" lengthAdjust="spacingAndGlyphs" font-style="italic" font-weight="400" stroke="#f4f3ee" stroke-width="3" stroke-linejoin="round" opacity="0.85">AONB</text><text x="1245" y="1065.5" font-size="21" fill="#5ea65e" textLength="52" lengthAdjust="spacingAndGlyphs" font-style="italic" font-weight="400" stroke-width="0.7" stroke="#5ea65e">AONB</text>
<text x="792" y="1135" font-size="21" fill="#5ea65e" textLength="86" lengthAdjust="spacingAndGlyphs" font-style="italic" font-weight="400" stroke="#f4f3ee" stroke-width="3" stroke-linejoin="round" opacity="0.85">Dartmoor</text><text x="792" y="1135" font-size="21" fill="#5ea65e" textLength="86" lengthAdjust="spacingAndGlyphs" font-style="italic" font-weight="400" stroke-width="0.7" stroke="#5ea65e">Dartmoor</text>
<text x="797" y="1158" font-size="21" fill="#5ea65e" textLength="76" lengthAdjust="spacingAndGlyphs" font-style="italic" font-weight="400" stroke="#f4f3ee" stroke-width="3" stroke-linejoin="round" opacity="0.85">National</text><text x="797" y="1158" font-size="21" fill="#5ea65e" textLength="76" lengthAdjust="spacingAndGlyphs" font-style="italic" font-weight="400" stroke-width="0.7" stroke="#5ea65e">National</text>
<text x="815" y="1181.5" font-size="21" fill="#5ea65e" textLength="40" lengthAdjust="spacingAndGlyphs" font-style="italic" font-weight="400" stroke="#f4f3ee" stroke-width="3" stroke-linejoin="round" opacity="0.85">Park</text><text x="815" y="1181.5" font-size="21" fill="#5ea65e" textLength="40" lengthAdjust="spacingAndGlyphs" font-style="italic" font-weight="400" stroke-width="0.7" stroke="#5ea65e">Park</text>
<text x="743" y="1271" font-size="20" fill="#555" textLength="52" lengthAdjust="spacingAndGlyphs" stroke="#f4f3ee" stroke-width="3" stroke-linejoin="round" opacity="0.85">South</text><text x="743" y="1271" font-size="20" fill="#555" textLength="52" lengthAdjust="spacingAndGlyphs">South</text>
<text x="2162" y="1003" font-size="20" fill="#555" textLength="12" lengthAdjust="spacingAndGlyphs" stroke="#f4f3ee" stroke-width="3" stroke-linejoin="round" opacity="0.85">B</text><text x="2162" y="1003" font-size="20" fill="#555" textLength="12" lengthAdjust="spacingAndGlyphs">B</text>
<text x="1646" y="1290" font-size="18" fill="#5ea65e" textLength="131" lengthAdjust="spacingAndGlyphs" font-style="italic" font-weight="400" stroke="#f4f3ee" stroke-width="3" stroke-linejoin="round" opacity="0.85">Wight-Barfleur</text><text x="1646" y="1290" font-size="18" fill="#5ea65e" textLength="131" lengthAdjust="spacingAndGlyphs" font-style="italic" font-weight="400" stroke-width="0.7" stroke="#5ea65e">Wight-Barfleur</text>
<path d="M1413.4 860.2 L1427.4 839.2 L1453.4 839.2 L1444.4 851.2 Z" fill="#000" opacity="0.35" filter="url(#blur3)"/>
<path d="M1417.4 856.2 L1443.4 847.2" stroke="#222" stroke-width="4" opacity="0.45" filter="url(#sblur)"/>
<path d="M1413.4 860.2 L1389.6000000000001 827.6 A29.5 29.5 0 1 1 1437.2 827.6 Z" fill="#0a5fa4"/>
<circle cx="1412.9" cy="802.2" r="6" fill="#fff"/>
<path d="M1402.4 820.2 C1402.4 811.2 1407.4 808.7 1411.4 808.7 L1414.4 808.7 C1419.4 808.7 1424.4 811.2 1424.4 820.2 Z" fill="#fff"/>
<path d="M1407.4 809.2 L1407.4 814.7" stroke="#0a5fa4" stroke-width="1.5"/>
<circle cx="1407.4" cy="816.2" r="1.8" fill="none" stroke="#0a5fa4" stroke-width="1.4"/>
<path d="M1415.9 819.2 L1415.9 814.2 A3 3 0 0 1 1421.9 814.2 L1421.9 819.2" fill="none" stroke="#0a5fa4" stroke-width="1.5"/>
<path d="M1529.4 930.6 L1543.4 909.6 L1569.4 909.6 L1560.4 921.6 Z" fill="#000" opacity="0.35" filter="url(#blur3)"/>
<path d="M1533.4 926.6 L1559.4 917.6" stroke="#222" stroke-width="4" opacity="0.45" filter="url(#sblur)"/>
<path d="M1529.4 930.6 L1505.6000000000001 898.0 A29.5 29.5 0 1 1 1553.2 898.0 Z" fill="#0a5fa4"/>
<circle cx="1528.9" cy="872.6" r="6" fill="#fff"/>
<path d="M1518.4 890.6 C1518.4 881.6 1523.4 879.1 1527.4 879.1 L1530.4 879.1 C1535.4 879.1 1540.4 881.6 1540.4 890.6 Z" fill="#fff"/>
<path d="M1523.4 879.6 L1523.4 885.1" stroke="#0a5fa4" stroke-width="1.5"/>
<circle cx="1523.4" cy="886.6" r="1.8" fill="none" stroke="#0a5fa4" stroke-width="1.4"/>
<path d="M1531.9 889.6 L1531.9 884.6 A3 3 0 0 1 1537.9 884.6 L1537.9 889.6" fill="none" stroke="#0a5fa4" stroke-width="1.5"/>
<path d="M1567.3 1019 L1581.3 998 L1607.3 998 L1598.3 1010 Z" fill="#000" opacity="0.35" filter="url(#blur3)"/>
<path d="M1571.3 1015 L1597.3 1006" stroke="#222" stroke-width="4" opacity="0.45" filter="url(#sblur)"/>
<path d="M1567.3 1019 L1543.5 986.4 A29.5 29.5 0 1 1 1591.1 986.4 Z" fill="#0a5fa4"/>
<circle cx="1566.8" cy="961" r="6" fill="#fff"/>
<path d="M1556.3 979 C1556.3 970 1561.3 967.5 1565.3 967.5 L1568.3 967.5 C1573.3 967.5 1578.3 970 1578.3 979 Z" fill="#fff"/>
<path d="M1561.3 968 L1561.3 973.5" stroke="#0a5fa4" stroke-width="1.5"/>
<circle cx="1561.3" cy="975" r="1.8" fill="none" stroke="#0a5fa4" stroke-width="1.4"/>
<path d="M1569.8 978 L1569.8 973 A3 3 0 0 1 1575.8 973 L1575.8 978" fill="none" stroke="#0a5fa4" stroke-width="1.5"/>
<path d="M1369.3 1166 L1383.3 1145 L1409.3 1145 L1400.3 1157 Z" fill="#000" opacity="0.35" filter="url(#blur3)"/>
<path d="M1373.3 1162 L1399.3 1153" stroke="#222" stroke-width="4" opacity="0.45" filter="url(#sblur)"/>
<path d="M1369.3 1166 L1345.5 1133.4 A29.5 29.5 0 1 1 1393.1 1133.4 Z" fill="#0a5fa4"/>
<circle cx="1368.8" cy="1108" r="6" fill="#fff"/>
<path d="M1358.3 1126 C1358.3 1117 1363.3 1114.5 1367.3 1114.5 L1370.3 1114.5 C1375.3 1114.5 1380.3 1117 1380.3 1126 Z" fill="#fff"/>
<path d="M1363.3 1115 L1363.3 1120.5" stroke="#0a5fa4" stroke-width="1.5"/>
<circle cx="1363.3" cy="1122" r="1.8" fill="none" stroke="#0a5fa4" stroke-width="1.4"/>
<path d="M1371.8 1125 L1371.8 1120 A3 3 0 0 1 1377.8 1120 L1377.8 1125" fill="none" stroke="#0a5fa4" stroke-width="1.5"/>
<rect x="786" y="721" width="56" height="108" rx="8" fill="#000" opacity="0.28" filter="url(#blur3)"/>
<rect x="788" y="722" width="52" height="104" rx="7" fill="#fff"/>
<rect x="788" y="772" width="52" height="2" fill="#ccc"/>
<rect x="805" y="748.4" width="20" height="4" fill="#000"/><rect x="813" y="740.4" width="4" height="20" fill="#000"/>
<rect x="805" y="800.4" width="20" height="4" fill="#000"/>
<rect x="1664" y="1290" width="504" height="32" fill="#fff" fill-opacity="0.8"/>
<text x="1673" y="1314" font-size="22" fill="#0078a8" textLength="67" lengthAdjust="spacingAndGlyphs">Leaflet</text>
<text x="1745" y="1314" font-size="22" fill="#333" textLength="113" lengthAdjust="spacingAndGlyphs">| Data by ©</text>
<text x="1863" y="1314" font-size="22" fill="#0078a8" textLength="155" lengthAdjust="spacingAndGlyphs">OpenStreetMap</text>
<text x="2018" y="1314" font-size="22" fill="#333" textLength="70" lengthAdjust="spacingAndGlyphs">, under</text>
<text x="2094" y="1314" font-size="22" fill="#0078a8" textLength="57" lengthAdjust="spacingAndGlyphs">ODbL</text>
<text x="2151" y="1314" font-size="22" fill="#333">.</text>
</g>
</svg>
</body></html>
